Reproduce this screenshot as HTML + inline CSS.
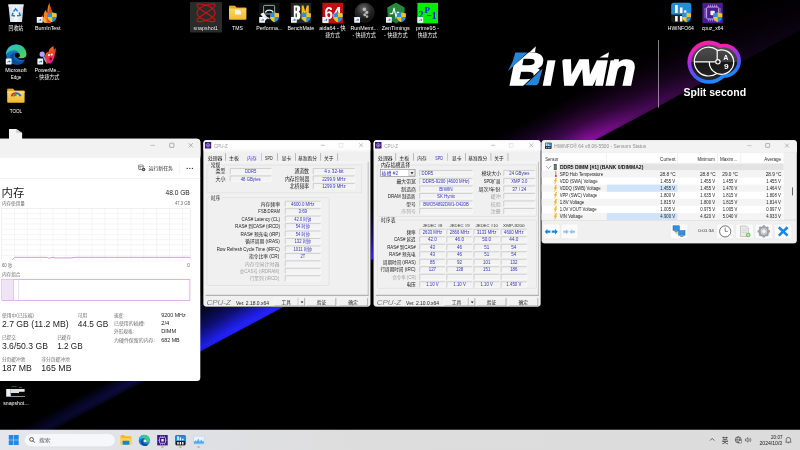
<!DOCTYPE html>
<html><head><meta charset="utf-8"><title>desktop</title><style>
html,body{margin:0;padding:0;background:#000;}
#r{position:relative;width:800px;height:450px;overflow:hidden;background:#000;font-family:'Liberation Sans','Noto Sans CJK SC',sans-serif;filter:blur(0.35px);}
#r div,#r span,#r>svg{position:absolute;white-space:nowrap;line-height:1;}
#r span{display:inline-block;}
#r>svg{left:0;top:0;}
.lb{text-shadow:0 0 1px #000,0.3px 0.4px 0.6px #000;}
</style></head><body><div id="r">
<svg width="800" height="450" viewBox="0 0 800 450"><svg x="0" y="0" width="800" height="450" viewBox="0 0 800 450">
<defs>
<linearGradient id="bc" x1="-240" y1="0" x2="700" y2="0" gradientUnits="userSpaceOnUse">
<stop offset="0" stop-color="#04041a"/><stop offset="0.191" stop-color="#0b0b3c"/><stop offset="0.25" stop-color="#1c1ce0"/><stop offset="0.30" stop-color="#2222ff"/><stop offset="0.415" stop-color="#2a20f0"/>
<stop offset="0.606" stop-color="#5a18c8"/><stop offset="0.723" stop-color="#8a10a0"/><stop offset="0.787" stop-color="#4c0a5c"/><stop offset="0.851" stop-color="#2a0836"/><stop offset="0.915" stop-color="#0f0416"/><stop offset="1" stop-color="#08020c"/>
</linearGradient>
<linearGradient id="bm" x1="0" y1="-50" x2="0" y2="0" gradientUnits="userSpaceOnUse">
<stop offset="0" stop-color="#fff" stop-opacity="0"/><stop offset="0.3" stop-color="#fff" stop-opacity="0.16"/><stop offset="0.6" stop-color="#fff" stop-opacity="0.44"/><stop offset="0.84" stop-color="#fff" stop-opacity="0.85"/><stop offset="0.93" stop-color="#fff" stop-opacity="1"/><stop offset="1" stop-color="#fff" stop-opacity="0.93"/>
</linearGradient>
<mask id="mk" maskUnits="userSpaceOnUse" x="-300" y="-60" width="1100" height="61"><rect x="-300" y="-60" width="1100" height="60" fill="url(#bm)"/></mask>
<linearGradient id="bc2" x1="-300" y1="0" x2="-40" y2="0" gradientUnits="userSpaceOnUse"><stop offset="0" stop-color="#020208"/><stop offset="0.35" stop-color="#060622"/><stop offset="0.75" stop-color="#0a0a3a"/><stop offset="1" stop-color="#0e0e48"/></linearGradient>
<linearGradient id="bm2" x1="0" y1="-18" x2="0" y2="0" gradientUnits="userSpaceOnUse"><stop offset="0" stop-color="#fff" stop-opacity="0"/><stop offset="0.45" stop-color="#fff" stop-opacity="0.7"/><stop offset="0.72" stop-color="#fff" stop-opacity="1"/><stop offset="1" stop-color="#fff" stop-opacity="0.35"/></linearGradient>
<mask id="mk2" maskUnits="userSpaceOnUse" x="-300" y="-18" width="262" height="18"><rect x="-300" y="-18" width="262" height="18" fill="url(#bm2)"/></mask>
</defs>
<g transform="translate(200.6 351.5) rotate(-28.15)">
<rect x="-40" y="-60" width="840" height="60" fill="url(#bc)" mask="url(#mk)"/>
<rect x="-300" y="-18" width="261" height="18" fill="url(#bc2)" mask="url(#mk2)"/>
</g>
</svg><defs><linearGradient id="tbg" x1="0" y1="0" x2="1" y2="0"><stop offset="0" stop-color="#e4e6eb"/><stop offset="0.22" stop-color="#e0e1e5"/><stop offset="0.45" stop-color="#dddddd"/><stop offset="1" stop-color="#dcdcdc"/></linearGradient></defs><rect x="0" y="429.75" width="800" height="20.5" fill="url(#tbg)"/><rect x="-8" y="138.85" width="208.3" height="242.1" rx="3.5" fill="#fff"/><rect x="-8" y="138.85" width="208.3" height="18.9" rx="3.5" fill="#f2f2f2"/><rect x="-8" y="145" width="208.3" height="12.75" fill="#f2f2f2"/><rect x="-8" y="178" width="208.3" height="0.5" fill="#e6e6e6"/><rect x="179.6" y="161.5" width="0.45" height="12.5" fill="#e6e6e6"/><svg x="143.3" y="139.6" width="60" height="12" viewBox="0 0 60 12">
<path d="M7.2 5.8h4.4" stroke="#8a8a8a" stroke-width="0.5" fill="none"/>
<rect x="26.4" y="3.6" width="4.2" height="4.2" rx="0.5" stroke="#777" stroke-width="0.55" fill="none"/>
<path d="M45.4 3.6l4.2 4.2M49.6 3.6l-4.2 4.2" stroke="#777" stroke-width="0.55" fill="none"/>
</svg><svg x="138" y="164.3" width="10" height="8" viewBox="0 0 10 8">
<rect x="0.6" y="0.6" width="4.6" height="4.6" rx="0.6" stroke="#333" stroke-width="0.55" fill="none"/>
<path d="M0.6 2.3h4.6M2.2 2.3v2.9" stroke="#333" stroke-width="0.45"/>
<circle cx="5.6" cy="5.2" r="1.7" fill="#333"/><path d="M5.6 4.3v1.8M4.7 5.2h1.8" stroke="#fff" stroke-width="0.45"/>
</svg></svg>
<span style="top:167px;font-size:4.9px;color:#222;left:148px;transform-origin:0 0;transform:translate(0.5px,0.3px) rotate(0.01deg) scaleX(1.001);">运行新任务</span>
<svg width="800" height="450" viewBox="0 0 800 450"><svg x="186" y="167" width="8" height="3" viewBox="0 0 8 3"><circle cx="1.2" cy="1.4" r="0.62" fill="#222"/><circle cx="3.8" cy="1.4" r="0.62" fill="#222"/><circle cx="6.4" cy="1.4" r="0.62" fill="#222"/></svg></svg>
<span style="top:187px;font-size:11.6px;color:#1b1b1b;left:1px;transform-origin:0 0;transform:translate(0.6px,0.3px) rotate(0.01deg) scaleX(0.983);">内存</span>
<span style="top:190px;font-size:6.7px;color:#1b1b1b;right:609px;transform-origin:100% 0;transform:translate(-0.8px,0.2px) rotate(0.01deg) scaleX(0.990);">48.0 GB</span>
<span style="top:202px;font-size:4.7px;color:#6b6b6b;left:1px;transform-origin:0 0;transform:translate(0.9px,0.1px) rotate(0.01deg) scaleX(0.981);">内存使用量</span>
<span style="top:202px;font-size:4.7px;color:#6b6b6b;right:609px;transform-origin:100% 0;transform:translate(-0.8px,0px) rotate(0.01deg) scaleX(0.901);">47.3 GB</span>
<svg width="800" height="450" viewBox="0 0 800 450"><svg x="0" y="200" width="200" height="60" viewBox="0 200 200 60"><rect x="1.7" y="208.4" width="188.70000000000002" height="52.099999999999994" fill="#fff" stroke="#e2dfe5" stroke-width="0.5"/><path d="M1.7 213.61H190.4 M1.7 218.82H190.4 M1.7 224.03H190.4 M1.7 229.24H190.4 M1.7 234.45H190.4 M1.7 239.66H190.4 M1.7 244.87H190.4 M1.7 250.08H190.4 M1.7 255.29H190.4 M14.43 208.4V260.5 M27.36 208.4V260.5 M40.29 208.4V260.5 M53.22 208.4V260.5 M66.15 208.4V260.5 M79.08 208.4V260.5 M92.01 208.4V260.5 M104.94 208.4V260.5 M117.87 208.4V260.5 M130.80 208.4V260.5 M143.73 208.4V260.5 M156.66 208.4V260.5 M169.59 208.4V260.5 M182.52 208.4V260.5" stroke="#eaeaea" stroke-width="0.5" fill="none"/><path d="M11.4 260.5 L14.6 257.3 H46 L49.5 258.2 L52.5 257.2 L55 257.9 H72 L75.5 257.3 H190.4" stroke="#c07ad2" stroke-width="0.75" fill="none"/></svg></svg>
<span style="top:263px;font-size:4.6px;color:#6b6b6b;left:1px;transform-origin:0 0;transform:translate(0.9px,0.9px) rotate(0.01deg) scaleX(0.938);">60 秒</span>
<span style="top:263px;font-size:4.6px;color:#6b6b6b;right:609px;transform-origin:100% 0;transform:translate(-0.8px,0.9px) rotate(0.01deg);">0</span>
<span style="top:273px;font-size:4.7px;color:#6b6b6b;left:1px;transform-origin:0 0;transform:translate(0.9px,0.2px) rotate(0.01deg) scaleX(0.986);">内存组合</span>
<svg width="800" height="450" viewBox="0 0 800 450"><rect x="1.9" y="279.3" width="188" height="21" fill="#fff" stroke="#c583d6" stroke-width="0.6"/><rect x="2.2" y="279.6" width="11.2" height="20.4" fill="#efe4f3"/><rect x="13.3" y="279.6" width="0.5" height="20.4" fill="#c9a0d8"/><rect x="18" y="279.6" width="0.5" height="20.4" fill="#dcc3e6"/></svg>
<span style="top:313px;font-size:4.7px;color:#6b6b6b;left:1px;transform-origin:0 0;transform:translate(0.9px,0.6px) rotate(0.01deg) scaleX(1.024);">使用中(已压缩)</span>
<span style="top:319px;font-size:8.5px;color:#1b1b1b;left:1px;transform-origin:0 0;transform:translate(0.9px,0.7px) rotate(0.01deg) scaleX(1.020);">2.7 GB (11.2 MB)</span>
<span style="top:313px;font-size:4.7px;color:#6b6b6b;left:77px;transform-origin:0 0;transform:translate(0.8px,0.6px) rotate(0.01deg) scaleX(0.990);">可用</span>
<span style="top:319px;font-size:8.5px;color:#1b1b1b;left:77px;transform-origin:0 0;transform:translate(0.8px,0.7px) rotate(0.01deg) scaleX(0.978);">44.5 GB</span>
<span style="top:335px;font-size:4.7px;color:#6b6b6b;left:1px;transform-origin:0 0;transform:translate(0.9px,0.6px) rotate(0.01deg) scaleX(0.994);">已提交</span>
<span style="top:341px;font-size:8.5px;color:#1b1b1b;left:1px;transform-origin:0 0;transform:translate(0.9px,0.7px) rotate(0.01deg) scaleX(1.014);">3.6/50.3 GB</span>
<span style="top:335px;font-size:4.7px;color:#6b6b6b;left:57px;transform-origin:0 0;transform:translate(0.2px,0.6px) rotate(0.01deg) scaleX(0.994);">已缓存</span>
<span style="top:341px;font-size:8.5px;color:#1b1b1b;left:57px;transform-origin:0 0;transform:translate(0.2px,0.7px) rotate(0.01deg) scaleX(0.963);">1.2 GB</span>
<span style="top:357px;font-size:4.7px;color:#6b6b6b;left:1px;transform-origin:0 0;transform:translate(0.9px,0.6px) rotate(0.01deg) scaleX(1.002);">分页缓冲池</span>
<span style="top:363px;font-size:8.5px;color:#1b1b1b;left:1px;transform-origin:0 0;transform:translate(0.9px,0.7px) rotate(0.01deg) scaleX(1.024);">187 MB</span>
<span style="top:357px;font-size:4.7px;color:#6b6b6b;left:41px;transform-origin:0 0;transform:translate(0.2px,0.6px) rotate(0.01deg) scaleX(1.013);">非分页缓冲池</span>
<span style="top:363px;font-size:8.5px;color:#1b1b1b;left:41px;transform-origin:0 0;transform:translate(0.2px,0.7px) rotate(0.01deg) scaleX(1.034);">165 MB</span>
<span style="top:313px;font-size:4.7px;color:#6b6b6b;left:114px;transform-origin:0 0;transform:translate(0px,0.7px) rotate(0.01deg) scaleX(0.982);">速度:</span>
<span style="top:312px;font-size:5.3px;color:#1b1b1b;left:161px;transform-origin:0 0;transform:translate(0.2px,0.7px) rotate(0.01deg) scaleX(1.014);">9200 MHz</span>
<span style="top:322px;font-size:4.7px;color:#6b6b6b;left:114px;transform-origin:0 0;transform:translate(0px,0.07px) rotate(0.01deg) scaleX(1.053);">已使用的插槽:</span>
<span style="top:321px;font-size:5.3px;color:#1b1b1b;left:161px;transform-origin:0 0;transform:translate(0.2px,0.07px) rotate(0.01deg) scaleX(1.085);">2/4</span>
<span style="top:330px;font-size:4.7px;color:#6b6b6b;left:114px;transform-origin:0 0;transform:translate(0px,0.44px) rotate(0.01deg) scaleX(0.997);">外形规格:</span>
<span style="top:329px;font-size:5.3px;color:#1b1b1b;left:161px;transform-origin:0 0;transform:translate(0.2px,0.44px) rotate(0.01deg) scaleX(1.062);">DIMM</span>
<span style="top:338px;font-size:4.7px;color:#6b6b6b;left:114px;transform-origin:0 0;transform:translate(0px,0.81px) rotate(0.01deg) scaleX(1.056);">为硬件保留的内存:</span>
<span style="top:337px;font-size:5.3px;color:#1b1b1b;left:161px;transform-origin:0 0;transform:translate(0.2px,0.81px) rotate(0.01deg) scaleX(1.013);">682 MB</span>
<svg width="800" height="450" viewBox="0 0 800 450"><rect x="203.1" y="139.9" width="167.6" height="167.1" rx="3.4" fill="#4a4a4a"/><rect x="203.5" y="140.3" width="166.8" height="166.3" rx="3" fill="#f0f0f0"/><defs><linearGradient id="ctg203" x1="0" y1="0" x2="0" y2="1"><stop offset="0" stop-color="#fdfdfd"/><stop offset="0.72" stop-color="#fdfdfd"/><stop offset="1" stop-color="#f0f0f0"/></linearGradient></defs><rect x="203.5" y="140.3" width="166.8" height="12" rx="3" fill="url(#ctg203)"/><svg x="204.7" y="141.9" width="7" height="7" viewBox="0 0 7 7"><rect width="6.6" height="6.6" rx="0.5" fill="#3d1783"/><circle cx="3.3" cy="3.3" r="1.7" fill="none" stroke="#b9a2ea" stroke-width="0.7"/><circle cx="3.3" cy="3.3" r="0.7" fill="#d9cbf6"/><path d="M3.3 0.6v1M3.3 5v1M0.6 3.3h1M5 3.3h1" stroke="#8e6fd0" stroke-width="0.5"/></svg></svg>
<span style="top:143px;font-size:5px;color:#9b9b9b;left:214px;transform-origin:0 0;transform:translate(0.1px,0.7px) rotate(0.01deg) scaleX(0.890);">CPU-Z</span>
<svg width="800" height="450" viewBox="0 0 800 450"><svg x="318.5" y="140.5" width="50" height="10" viewBox="0 0 50 10">
<path d="M2.4 4.8h4.2" stroke="#8a8a8a" stroke-width="0.5"/>
<rect x="20.6" y="2.9" width="3.8" height="3.8" stroke="#d6d6d6" stroke-width="0.5" fill="none"/>
<path d="M40.6 2.8l3.9 3.9M44.5 2.8l-3.9 3.9" stroke="#8a8a8a" stroke-width="0.5"/></svg></svg>
<span style="top:155px;font-size:5.1px;color:#1c1c1c;left:207px;transform-origin:0 0;transform:translate(0.9px,0.6px) rotate(0.01deg) scaleX(0.954);">处理器</span>
<span style="top:155px;font-size:5.1px;color:#1c1c1c;left:229px;transform-origin:0 0;transform:translate(0px,0.6px) rotate(0.01deg) scaleX(0.980);">主板</span>
<span style="top:155px;font-size:5.1px;color:#3434c4;left:247px;transform-origin:0 0;transform:translate(0.1px,0.6px) rotate(0.01deg) scaleX(0.941);">内存</span>
<span style="top:156px;font-size:4.5px;color:#1c1c1c;left:265px;transform-origin:0 0;transform:translate(0.1px,0.6px) rotate(0.01deg) scaleX(0.820);">SPD</span>
<span style="top:155px;font-size:5.1px;color:#1c1c1c;left:281px;transform-origin:0 0;transform:translate(0.7px,0.6px) rotate(0.01deg) scaleX(0.941);">显卡</span>
<span style="top:155px;font-size:5.1px;color:#1c1c1c;left:298px;transform-origin:0 0;transform:translate(0.1px,0.6px) rotate(0.01deg) scaleX(0.932);">基准跑分</span>
<span style="top:155px;font-size:5.1px;color:#1c1c1c;left:324px;transform-origin:0 0;transform:translate(0.1px,0.6px) rotate(0.01deg) scaleX(0.921);">关于</span>
<svg width="800" height="450" viewBox="0 0 800 450"><rect x="225.3" y="153.2" width="0.55" height="7.6" fill="#8c8c8c"/><rect x="261" y="153.2" width="0.55" height="7.6" fill="#a9a9a9"/><rect x="277.1" y="153.2" width="0.55" height="7.6" fill="#8c8c8c"/><rect x="295" y="153.2" width="0.55" height="7.6" fill="#8c8c8c"/><rect x="320.5" y="153.2" width="0.55" height="7.6" fill="#8c8c8c"/><rect x="337.5" y="153.2" width="0.55" height="7.6" fill="#8c8c8c"/><path d="M205.85 295.6V162.05H368.5" fill="none" stroke="#fcfcfc" stroke-width="0.5"/><path d="M368.2 161.8V295.3" fill="none" stroke="#9a9a9a" stroke-width="0.6"/><path d="M205.6 295.3H368.5" fill="none" stroke="#6e6e6e" stroke-width="0.6"/></svg>
<span style="top:298px;font-size:8px;color:#808080;font-style:italic;left:206px;transform-origin:0 0;transform:translate(0.5px,0.5px) rotate(0.01deg) scaleX(0.998);">CPU-Z</span>
<span style="top:301px;font-size:4.5px;color:#222;left:235px;transform-origin:0 0;transform:translate(0.9px,0.6px) rotate(0.01deg) scaleX(1.099);">Ver. 2.18.0.x64</span>
<svg width="800" height="450" viewBox="0 0 800 450"><rect x="273.9" y="298" width="24.6" height="8.2" fill="#f1f1f1"/><path d="M274.15 306.2V298.25H298.5" fill="none" stroke="#fff" stroke-width="0.5"/><path d="M273.9 305.9H298.2V298" fill="none" stroke="#868686" stroke-width="0.6"/></svg>
<div style="top:300px;font-size:5.1px;color:#1c1c1c;left:136px;width:300px;text-align:center;transform-origin:50% 0;transform:translate(0.2px,0px) rotate(0.01deg) scaleX(0.931);"><span style="position:static">工具</span></div>
<svg width="800" height="450" viewBox="0 0 800 450"><rect x="298.7" y="298" width="6.2" height="8.2" fill="#f1f1f1"/><path d="M298.95 306.2V298.25H304.9" fill="none" stroke="#fff" stroke-width="0.5"/><path d="M298.7 305.9H304.6V298" fill="none" stroke="#868686" stroke-width="0.6"/><svg x="300.3" y="301" width="4" height="3" viewBox="0 0 4 3"><path d="M0.3 0.4h2.8l-1.4 1.8z" fill="#111"/></svg><rect x="306.7" y="298" width="29.4" height="8.2" fill="#f1f1f1"/><path d="M306.95 306.2V298.25H336.1" fill="none" stroke="#fff" stroke-width="0.5"/><path d="M306.7 305.9H335.8V298" fill="none" stroke="#868686" stroke-width="0.6"/></svg>
<div style="top:300px;font-size:5.1px;color:#1c1c1c;left:171px;width:300px;text-align:center;transform-origin:50% 0;transform:translate(0.4px,0px) rotate(0.01deg) scaleX(0.931);"><span style="position:static">验证</span></div>
<svg width="800" height="450" viewBox="0 0 800 450"><rect x="338.3" y="298" width="29.6" height="8.2" fill="#f1f1f1"/><path d="M338.55 306.2V298.25H367.9" fill="none" stroke="#fff" stroke-width="0.5"/><path d="M338.3 305.9H367.6V298" fill="none" stroke="#868686" stroke-width="0.6"/></svg>
<div style="top:300px;font-size:5.1px;color:#1c1c1c;left:203px;width:300px;text-align:center;transform-origin:50% 0;transform:translate(0.1px,0px) rotate(0.01deg) scaleX(0.931);"><span style="position:static">确定</span></div>
<svg width="800" height="450" viewBox="0 0 800 450"><rect x="207.35" y="165.65" width="154.7" height="27.7" rx="0.8" fill="none" stroke="#fff" stroke-width="0.5"/><rect x="206.95" y="165.25" width="154.7" height="27.7" rx="0.8" fill="none" stroke="#d0d0d0" stroke-width="0.5"/><rect x="209.7" y="163" width="11.7" height="4" fill="#f0f0f0"/></svg>
<span style="top:163px;font-size:5.2px;color:#1c1c1c;left:210px;transform-origin:0 0;transform:translate(0.7px,0px) rotate(0.01deg) scaleX(0.914);">常规</span>
<span style="top:169px;font-size:5.2px;color:#1c1c1c;right:574px;transform-origin:100% 0;transform:translate(-0.8px,0.2px) rotate(0.01deg) scaleX(0.962);">类型</span>
<svg width="800" height="450" viewBox="0 0 800 450"><rect x="230" y="168.2" width="41.4" height="5.9" fill="#f3f3f3"/><path d="M230.25 174.1V168.45H271.4" fill="none" stroke="#adadad" stroke-width="0.5"/><path d="M230.5 173.85H271.15V168.7" fill="none" stroke="#fff" stroke-width="0.5"/></svg>
<div style="top:170px;font-size:4.5px;color:#3434c4;left:100px;width:300px;text-align:center;transform-origin:50% 0;transform:translate(0.7px,0.15px) rotate(0.01deg) scaleX(0.938);"><span style="position:static">DDR5</span></div>
<span style="top:176px;font-size:5.2px;color:#1c1c1c;right:574px;transform-origin:100% 0;transform:translate(-0.8px,0.7px) rotate(0.01deg) scaleX(0.962);">大小</span>
<svg width="800" height="450" viewBox="0 0 800 450"><rect x="230" y="175.7" width="41.4" height="5.9" fill="#f3f3f3"/><path d="M230.25 181.6V175.95H271.4" fill="none" stroke="#adadad" stroke-width="0.5"/><path d="M230.5 181.35H271.15V176.2" fill="none" stroke="#fff" stroke-width="0.5"/></svg>
<div style="top:177px;font-size:4.5px;color:#3434c4;left:100px;width:300px;text-align:center;transform-origin:50% 0;transform:translate(0.7px,0.65px) rotate(0.01deg) scaleX(0.952);"><span style="position:static">48 GBytes</span></div>
<span style="top:169px;font-size:5.2px;color:#1c1c1c;right:490px;transform-origin:100% 0;transform:translate(-0.6px,0.2px) rotate(0.01deg) scaleX(0.937);">通道数</span>
<svg width="800" height="450" viewBox="0 0 800 450"><rect x="313" y="168.2" width="41.8" height="5.9" fill="#f3f3f3"/><path d="M313.25 174.1V168.45H354.8" fill="none" stroke="#adadad" stroke-width="0.5"/><path d="M313.5 173.85H354.55V168.7" fill="none" stroke="#fff" stroke-width="0.5"/></svg>
<div style="top:170px;font-size:4.5px;color:#3434c4;left:183px;width:300px;text-align:center;transform-origin:50% 0;transform:translate(0.9px,0.15px) rotate(0.01deg) scaleX(1.053);"><span style="position:static">4 x 32-bit</span></div>
<span style="top:176px;font-size:5.2px;color:#1c1c1c;right:490px;transform-origin:100% 0;transform:translate(-0.6px,0.7px) rotate(0.01deg) scaleX(0.940);">内存控制器</span>
<svg width="800" height="450" viewBox="0 0 800 450"><rect x="313" y="175.7" width="41.8" height="5.9" fill="#f3f3f3"/><path d="M313.25 181.6V175.95H354.8" fill="none" stroke="#adadad" stroke-width="0.5"/><path d="M313.5 181.35H354.55V176.2" fill="none" stroke="#fff" stroke-width="0.5"/></svg>
<div style="top:177px;font-size:4.5px;color:#3434c4;left:183px;width:300px;text-align:center;transform-origin:50% 0;transform:translate(0.9px,0.65px) rotate(0.01deg) scaleX(0.968);"><span style="position:static">2299.9 MHz</span></div>
<span style="top:184px;font-size:5.2px;color:#1c1c1c;right:490px;transform-origin:100% 0;transform:translate(-0.6px,0.2px) rotate(0.01deg) scaleX(0.939);">北桥频率</span>
<svg width="800" height="450" viewBox="0 0 800 450"><rect x="313" y="183.2" width="41.8" height="5.9" fill="#f3f3f3"/><path d="M313.25 189.1V183.45H354.8" fill="none" stroke="#adadad" stroke-width="0.5"/><path d="M313.5 188.85H354.55V183.7" fill="none" stroke="#fff" stroke-width="0.5"/></svg>
<div style="top:185px;font-size:4.5px;color:#3434c4;left:183px;width:300px;text-align:center;transform-origin:50% 0;transform:translate(0.9px,0.15px) rotate(0.01deg) scaleX(0.968);"><span style="position:static">1299.9 MHz</span></div>
<svg width="800" height="450" viewBox="0 0 800 450"><rect x="207.35" y="198.25" width="122.3" height="87.7" rx="0.8" fill="none" stroke="#fff" stroke-width="0.5"/><rect x="206.95" y="197.85" width="122.3" height="87.7" rx="0.8" fill="none" stroke="#d0d0d0" stroke-width="0.5"/><rect x="209.7" y="195.6" width="11.7" height="4" fill="#f0f0f0"/></svg>
<span style="top:195px;font-size:5.2px;color:#1c1c1c;left:210px;transform-origin:0 0;transform:translate(0.7px,0.6px) rotate(0.01deg) scaleX(0.914);">时序</span>
<span style="top:202px;font-size:5.1px;color:#1c1c1c;right:520px;transform-origin:100% 0;transform:translate(-0.3px,0px) rotate(0.01deg) scaleX(0.966);">内存频率</span>
<svg width="800" height="450" viewBox="0 0 800 450"><rect x="285" y="201" width="35.6" height="5.9" fill="#f3f3f3"/><path d="M285.25 206.9V201.25H320.6" fill="none" stroke="#adadad" stroke-width="0.5"/><path d="M285.5 206.65H320.35V201.5" fill="none" stroke="#fff" stroke-width="0.5"/></svg>
<div style="top:203px;font-size:4.5px;color:#3434c4;left:152px;width:300px;text-align:center;transform-origin:50% 0;transform:translate(0.8px,0px) rotate(0.01deg) scaleX(0.968);"><span style="position:static">4600.0 MHz</span></div>
<span style="top:210px;font-size:4.7px;color:#1c1c1c;right:520px;transform-origin:100% 0;transform:translate(-0.3px,0.45px) rotate(0.01deg) scaleX(0.891);">FSB:DRAM</span>
<svg width="800" height="450" viewBox="0 0 800 450"><rect x="285" y="208.45" width="35.6" height="5.9" fill="#f3f3f3"/><path d="M285.25 214.35V208.7H320.6" fill="none" stroke="#adadad" stroke-width="0.5"/><path d="M285.5 214.1H320.35V208.95" fill="none" stroke="#fff" stroke-width="0.5"/></svg>
<div style="top:210px;font-size:4.5px;color:#3434c4;left:152px;width:300px;text-align:center;transform-origin:50% 0;transform:translate(0.8px,0.45px) rotate(0.01deg) scaleX(0.970);"><span style="position:static">3:69</span></div>
<span style="top:217px;font-size:4.7px;color:#1c1c1c;right:520px;transform-origin:100% 0;transform:translate(-0.3px,0.9px) rotate(0.01deg) scaleX(0.956);">CAS# Latency (CL)</span>
<svg width="800" height="450" viewBox="0 0 800 450"><rect x="285" y="215.9" width="35.6" height="5.9" fill="#f3f3f3"/><path d="M285.25 221.8V216.15H320.6" fill="none" stroke="#adadad" stroke-width="0.5"/><path d="M285.5 221.55H320.35V216.4" fill="none" stroke="#fff" stroke-width="0.5"/></svg>
<div style="top:217px;font-size:4.5px;color:#3434c4;left:152px;width:300px;text-align:center;transform-origin:50% 0;transform:translate(0.8px,0.9px) rotate(0.01deg) scaleX(0.894);"><span style="position:static">42.0 时钟</span></div>
<span style="top:224px;font-size:5.1px;color:#1c1c1c;right:520px;transform-origin:100% 0;transform:translate(-0.3px,0.35px) rotate(0.01deg) scaleX(0.893);">RAS# 到CAS# (tRCD)</span>
<svg width="800" height="450" viewBox="0 0 800 450"><rect x="285" y="223.35" width="35.6" height="5.9" fill="#f3f3f3"/><path d="M285.25 229.25V223.6H320.6" fill="none" stroke="#adadad" stroke-width="0.5"/><path d="M285.5 229H320.35V223.85" fill="none" stroke="#fff" stroke-width="0.5"/></svg>
<div style="top:225px;font-size:4.5px;color:#3434c4;left:152px;width:300px;text-align:center;transform-origin:50% 0;transform:translate(0.8px,0.35px) rotate(0.01deg) scaleX(0.917);"><span style="position:static">54 时钟</span></div>
<span style="top:231px;font-size:5.1px;color:#1c1c1c;right:520px;transform-origin:100% 0;transform:translate(-0.3px,0.8px) rotate(0.01deg) scaleX(0.914);">RAS# 预充电 (tRP)</span>
<svg width="800" height="450" viewBox="0 0 800 450"><rect x="285" y="230.8" width="35.6" height="5.9" fill="#f3f3f3"/><path d="M285.25 236.7V231.05H320.6" fill="none" stroke="#adadad" stroke-width="0.5"/><path d="M285.5 236.45H320.35V231.3" fill="none" stroke="#fff" stroke-width="0.5"/></svg>
<div style="top:232px;font-size:4.5px;color:#3434c4;left:152px;width:300px;text-align:center;transform-origin:50% 0;transform:translate(0.8px,0.8px) rotate(0.01deg) scaleX(0.917);"><span style="position:static">54 时钟</span></div>
<span style="top:239px;font-size:5.1px;color:#1c1c1c;right:520px;transform-origin:100% 0;transform:translate(-0.3px,0.25px) rotate(0.01deg) scaleX(0.928);">循环周期 (tRAS)</span>
<svg width="800" height="450" viewBox="0 0 800 450"><rect x="285" y="238.25" width="35.6" height="5.9" fill="#f3f3f3"/><path d="M285.25 244.15V238.5H320.6" fill="none" stroke="#adadad" stroke-width="0.5"/><path d="M285.5 243.9H320.35V238.75" fill="none" stroke="#fff" stroke-width="0.5"/></svg>
<div style="top:240px;font-size:4.5px;color:#3434c4;left:152px;width:300px;text-align:center;transform-origin:50% 0;transform:translate(0.8px,0.25px) rotate(0.01deg) scaleX(0.929);"><span style="position:static">132 时钟</span></div>
<span style="top:247px;font-size:4.7px;color:#1c1c1c;right:520px;transform-origin:100% 0;transform:translate(-0.3px,0.7px) rotate(0.01deg) scaleX(0.941);">Row Refresh Cycle Time (tRFC)</span>
<svg width="800" height="450" viewBox="0 0 800 450"><rect x="285" y="245.7" width="35.6" height="5.9" fill="#f3f3f3"/><path d="M285.25 251.6V245.95H320.6" fill="none" stroke="#adadad" stroke-width="0.5"/><path d="M285.5 251.35H320.35V246.2" fill="none" stroke="#fff" stroke-width="0.5"/></svg>
<div style="top:247px;font-size:4.5px;color:#3434c4;left:152px;width:300px;text-align:center;transform-origin:50% 0;transform:translate(0.8px,0.7px) rotate(0.01deg) scaleX(0.928);"><span style="position:static">1011 时钟</span></div>
<span style="top:254px;font-size:5.1px;color:#1c1c1c;right:520px;transform-origin:100% 0;transform:translate(-0.3px,0.15px) rotate(0.01deg) scaleX(0.928);">指令比率 (CR)</span>
<svg width="800" height="450" viewBox="0 0 800 450"><rect x="285" y="253.15" width="35.6" height="5.9" fill="#f3f3f3"/><path d="M285.25 259.05V253.4H320.6" fill="none" stroke="#adadad" stroke-width="0.5"/><path d="M285.5 258.8H320.35V253.65" fill="none" stroke="#fff" stroke-width="0.5"/></svg>
<div style="top:255px;font-size:4.5px;color:#3434c4;left:152px;width:300px;text-align:center;transform-origin:50% 0;transform:translate(0.8px,0.15px) rotate(0.01deg) scaleX(0.873);"><span style="position:static">2T</span></div>
<span style="top:261px;font-size:5.1px;color:#a3a3a3;right:520px;transform-origin:100% 0;transform:translate(-0.3px,0.6px) rotate(0.01deg) scaleX(0.970);">内存空闲计时器</span>
<svg width="800" height="450" viewBox="0 0 800 450"><rect x="285" y="260.6" width="35.6" height="5.9" fill="#f3f3f3"/><path d="M285.25 266.5V260.85H320.6" fill="none" stroke="#adadad" stroke-width="0.5"/><path d="M285.5 266.25H320.35V261.1" fill="none" stroke="#fff" stroke-width="0.5"/></svg>
<span style="top:269px;font-size:5.1px;color:#a3a3a3;right:520px;transform-origin:100% 0;transform:translate(-0.3px,0.05px) rotate(0.01deg) scaleX(0.865);">总CAS号 (tRDRAM)</span>
<svg width="800" height="450" viewBox="0 0 800 450"><rect x="285" y="268.05" width="35.6" height="5.9" fill="#f3f3f3"/><path d="M285.25 273.95V268.3H320.6" fill="none" stroke="#adadad" stroke-width="0.5"/><path d="M285.5 273.7H320.35V268.55" fill="none" stroke="#fff" stroke-width="0.5"/></svg>
<span style="top:276px;font-size:5.1px;color:#a3a3a3;right:520px;transform-origin:100% 0;transform:translate(-0.3px,0.5px) rotate(0.01deg) scaleX(0.909);">行至列 (tRCD)</span>
<svg width="800" height="450" viewBox="0 0 800 450"><rect x="285" y="275.5" width="35.6" height="5.9" fill="#f3f3f3"/><path d="M285.25 281.4V275.75H320.6" fill="none" stroke="#adadad" stroke-width="0.5"/><path d="M285.5 281.15H320.35V276" fill="none" stroke="#fff" stroke-width="0.5"/><rect x="373.3" y="139.9" width="167.6" height="167.1" rx="3.4" fill="#4a4a4a"/><rect x="373.7" y="140.3" width="166.8" height="166.3" rx="3" fill="#f0f0f0"/><defs><linearGradient id="ctg373" x1="0" y1="0" x2="0" y2="1"><stop offset="0" stop-color="#fdfdfd"/><stop offset="0.72" stop-color="#fdfdfd"/><stop offset="1" stop-color="#f0f0f0"/></linearGradient></defs><rect x="373.7" y="140.3" width="166.8" height="12" rx="3" fill="url(#ctg373)"/><svg x="374.9" y="141.9" width="7" height="7" viewBox="0 0 7 7"><rect width="6.6" height="6.6" rx="0.5" fill="#3d1783"/><circle cx="3.3" cy="3.3" r="1.7" fill="none" stroke="#b9a2ea" stroke-width="0.7"/><circle cx="3.3" cy="3.3" r="0.7" fill="#d9cbf6"/><path d="M3.3 0.6v1M3.3 5v1M0.6 3.3h1M5 3.3h1" stroke="#8e6fd0" stroke-width="0.5"/></svg></svg>
<span style="top:143px;font-size:5px;color:#9b9b9b;left:384px;transform-origin:0 0;transform:translate(0.3px,0.7px) rotate(0.01deg) scaleX(0.890);">CPU-Z</span>
<svg width="800" height="450" viewBox="0 0 800 450"><svg x="488.7" y="140.5" width="50" height="10" viewBox="0 0 50 10">
<path d="M2.4 4.8h4.2" stroke="#8a8a8a" stroke-width="0.5"/>
<rect x="20.6" y="2.9" width="3.8" height="3.8" stroke="#d6d6d6" stroke-width="0.5" fill="none"/>
<path d="M40.6 2.8l3.9 3.9M44.5 2.8l-3.9 3.9" stroke="#8a8a8a" stroke-width="0.5"/></svg></svg>
<span style="top:155px;font-size:5.1px;color:#1c1c1c;left:378px;transform-origin:0 0;transform:translate(0.1px,0.6px) rotate(0.01deg) scaleX(0.954);">处理器</span>
<span style="top:155px;font-size:5.1px;color:#1c1c1c;left:399px;transform-origin:0 0;transform:translate(0.2px,0.6px) rotate(0.01deg) scaleX(0.980);">主板</span>
<span style="top:155px;font-size:5.1px;color:#1c1c1c;left:417px;transform-origin:0 0;transform:translate(0.3px,0.6px) rotate(0.01deg) scaleX(0.941);">内存</span>
<span style="top:156px;font-size:4.5px;color:#3434c4;left:435px;transform-origin:0 0;transform:translate(0.3px,0.6px) rotate(0.01deg) scaleX(0.820);">SPD</span>
<span style="top:155px;font-size:5.1px;color:#1c1c1c;left:451px;transform-origin:0 0;transform:translate(0.9px,0.6px) rotate(0.01deg) scaleX(0.941);">显卡</span>
<span style="top:155px;font-size:5.1px;color:#1c1c1c;left:468px;transform-origin:0 0;transform:translate(0.3px,0.6px) rotate(0.01deg) scaleX(0.932);">基准跑分</span>
<span style="top:155px;font-size:5.1px;color:#1c1c1c;left:494px;transform-origin:0 0;transform:translate(0.3px,0.6px) rotate(0.01deg) scaleX(0.921);">关于</span>
<svg width="800" height="450" viewBox="0 0 800 450"><rect x="395.5" y="153.2" width="0.55" height="7.6" fill="#8c8c8c"/><rect x="413.3" y="153.2" width="0.55" height="7.6" fill="#8c8c8c"/><rect x="447.3" y="153.2" width="0.55" height="7.6" fill="#a9a9a9"/><rect x="465.2" y="153.2" width="0.55" height="7.6" fill="#8c8c8c"/><rect x="490.7" y="153.2" width="0.55" height="7.6" fill="#8c8c8c"/><rect x="507.7" y="153.2" width="0.55" height="7.6" fill="#8c8c8c"/><path d="M376.05 295.6V162.05H538.7" fill="none" stroke="#fcfcfc" stroke-width="0.5"/><path d="M538.4 161.8V295.3" fill="none" stroke="#9a9a9a" stroke-width="0.6"/><path d="M375.8 295.3H538.7" fill="none" stroke="#6e6e6e" stroke-width="0.6"/></svg>
<span style="top:298px;font-size:8px;color:#808080;font-style:italic;left:376px;transform-origin:0 0;transform:translate(0.7px,0.5px) rotate(0.01deg) scaleX(0.998);">CPU-Z</span>
<span style="top:301px;font-size:4.5px;color:#222;left:406px;transform-origin:0 0;transform:translate(0.1px,0.6px) rotate(0.01deg) scaleX(1.099);">Ver. 2.10.0.x64</span>
<svg width="800" height="450" viewBox="0 0 800 450"><rect x="444.1" y="298" width="24.6" height="8.2" fill="#f1f1f1"/><path d="M444.35 306.2V298.25H468.7" fill="none" stroke="#fff" stroke-width="0.5"/><path d="M444.1 305.9H468.4V298" fill="none" stroke="#868686" stroke-width="0.6"/></svg>
<div style="top:300px;font-size:5.1px;color:#1c1c1c;left:306px;width:300px;text-align:center;transform-origin:50% 0;transform:translate(0.4px,0px) rotate(0.01deg) scaleX(0.931);"><span style="position:static">工具</span></div>
<svg width="800" height="450" viewBox="0 0 800 450"><rect x="468.9" y="298" width="6.2" height="8.2" fill="#f1f1f1"/><path d="M469.15 306.2V298.25H475.1" fill="none" stroke="#fff" stroke-width="0.5"/><path d="M468.9 305.9H474.8V298" fill="none" stroke="#868686" stroke-width="0.6"/><svg x="470.5" y="301" width="4" height="3" viewBox="0 0 4 3"><path d="M0.3 0.4h2.8l-1.4 1.8z" fill="#111"/></svg><rect x="476.9" y="298" width="29.4" height="8.2" fill="#f1f1f1"/><path d="M477.15 306.2V298.25H506.3" fill="none" stroke="#fff" stroke-width="0.5"/><path d="M476.9 305.9H506V298" fill="none" stroke="#868686" stroke-width="0.6"/></svg>
<div style="top:300px;font-size:5.1px;color:#1c1c1c;left:341px;width:300px;text-align:center;transform-origin:50% 0;transform:translate(0.6px,0px) rotate(0.01deg) scaleX(0.931);"><span style="position:static">验证</span></div>
<svg width="800" height="450" viewBox="0 0 800 450"><rect x="508.5" y="298" width="29.6" height="8.2" fill="#f1f1f1"/><path d="M508.75 306.2V298.25H538.1" fill="none" stroke="#fff" stroke-width="0.5"/><path d="M508.5 305.9H537.8V298" fill="none" stroke="#868686" stroke-width="0.6"/></svg>
<div style="top:300px;font-size:5.1px;color:#1c1c1c;left:373px;width:300px;text-align:center;transform-origin:50% 0;transform:translate(0.3px,0px) rotate(0.01deg) scaleX(0.931);"><span style="position:static">确定</span></div>
<svg width="800" height="450" viewBox="0 0 800 450"><rect x="377.65" y="165.65" width="159.3" height="51.2" rx="0.8" fill="none" stroke="#fff" stroke-width="0.5"/><rect x="377.25" y="165.25" width="159.3" height="51.2" rx="0.8" fill="none" stroke="#d0d0d0" stroke-width="0.5"/><rect x="380" y="163" width="31.2" height="4" fill="#f0f0f0"/></svg>
<span style="top:163px;font-size:5.2px;color:#1c1c1c;left:381px;transform-origin:0 0;transform:translate(0px,0px) rotate(0.01deg) scaleX(0.931);">内存插槽选择</span>
<svg width="800" height="450" viewBox="0 0 800 450"><rect x="380.65" y="169.25" width="34.4" height="7.2" fill="#fff" stroke="#6f6f6f" stroke-width="0.5"/></svg>
<span style="top:171px;font-size:5px;color:#3434c4;left:381px;transform-origin:0 0;transform:translate(0.6px,0px) rotate(0.01deg) scaleX(0.973);">插槽 #2</span>
<svg width="800" height="450" viewBox="0 0 800 450"><rect x="408.9" y="169.8" width="5.6" height="6.1" fill="#ececec" stroke="#9a9a9a" stroke-width="0.4"/><svg x="410.3" y="172" width="4" height="3" viewBox="0 0 4 3"><path d="M0.2 0.3h2.9l-1.45 1.9z" fill="#111"/></svg><rect x="419.4" y="170.2" width="53.2" height="5.9" fill="#f3f3f3"/><path d="M419.65 176.1V170.45H472.6" fill="none" stroke="#adadad" stroke-width="0.5"/><path d="M419.9 175.85H472.35V170.7" fill="none" stroke="#fff" stroke-width="0.5"/></svg>
<span style="top:172px;font-size:4.5px;color:#3434c4;left:421px;transform-origin:0 0;transform:translate(0.6px,0.2px) rotate(0.01deg) scaleX(0.938);">DDR5</span>
<span style="top:179px;font-size:5.1px;color:#1c1c1c;right:384px;transform-origin:100% 0;transform:translate(-0.4px,0.2px) rotate(0.01deg) scaleX(0.961);">最大带宽</span>
<svg width="800" height="450" viewBox="0 0 800 450"><rect x="419.4" y="178.2" width="53.2" height="5.9" fill="#f3f3f3"/><path d="M419.65 184.1V178.45H472.6" fill="none" stroke="#adadad" stroke-width="0.5"/><path d="M419.9 183.85H472.35V178.7" fill="none" stroke="#fff" stroke-width="0.5"/></svg>
<div style="top:180px;font-size:4.5px;color:#3434c4;left:296px;width:300px;text-align:center;transform-origin:50% 0;transform:translate(0px,0.15px) rotate(0.01deg) scaleX(0.968);"><span style="position:static">DDR5-9200 (4600 MHz)</span></div>
<span style="top:186px;font-size:5.1px;color:#1c1c1c;right:384px;transform-origin:100% 0;transform:translate(-0.4px,0.7px) rotate(0.01deg) scaleX(0.954);">制造商</span>
<svg width="800" height="450" viewBox="0 0 800 450"><rect x="419.4" y="185.7" width="53.2" height="5.9" fill="#f3f3f3"/><path d="M419.65 191.6V185.95H472.6" fill="none" stroke="#adadad" stroke-width="0.5"/><path d="M419.9 191.35H472.35V186.2" fill="none" stroke="#fff" stroke-width="0.5"/></svg>
<div style="top:187px;font-size:4.5px;color:#3434c4;left:296px;width:300px;text-align:center;transform-origin:50% 0;transform:translate(0px,0.65px) rotate(0.01deg) scaleX(1.038);"><span style="position:static">BIWIN</span></div>
<span style="top:194px;font-size:5.1px;color:#1c1c1c;right:384px;transform-origin:100% 0;transform:translate(-0.4px,0.2px) rotate(0.01deg) scaleX(0.871);">DRAM 制造商</span>
<svg width="800" height="450" viewBox="0 0 800 450"><rect x="419.4" y="193.2" width="53.2" height="5.9" fill="#f3f3f3"/><path d="M419.65 199.1V193.45H472.6" fill="none" stroke="#adadad" stroke-width="0.5"/><path d="M419.9 198.85H472.35V193.7" fill="none" stroke="#fff" stroke-width="0.5"/></svg>
<div style="top:195px;font-size:4.5px;color:#3434c4;left:296px;width:300px;text-align:center;transform-origin:50% 0;transform:translate(0px,0.15px) rotate(0.01deg) scaleX(0.972);"><span style="position:static">SK Hynix</span></div>
<span style="top:201px;font-size:5.1px;color:#1c1c1c;right:384px;transform-origin:100% 0;transform:translate(-0.4px,0.7px) rotate(0.01deg) scaleX(0.941);">型号</span>
<svg width="800" height="450" viewBox="0 0 800 450"><rect x="419.4" y="200.7" width="53.2" height="5.9" fill="#f3f3f3"/><path d="M419.65 206.6V200.95H472.6" fill="none" stroke="#adadad" stroke-width="0.5"/><path d="M419.9 206.35H472.35V201.2" fill="none" stroke="#fff" stroke-width="0.5"/></svg>
<div style="top:202px;font-size:4.5px;color:#3434c4;left:296px;width:300px;text-align:center;transform-origin:50% 0;transform:translate(0px,0.65px) rotate(0.01deg) scaleX(0.933);"><span style="position:static">BWO54892DW1-O420B</span></div>
<span style="top:209px;font-size:5.1px;color:#a3a3a3;right:384px;transform-origin:100% 0;transform:translate(-0.4px,0.2px) rotate(0.01deg) scaleX(0.954);">序列号</span>
<svg width="800" height="450" viewBox="0 0 800 450"><rect x="419.4" y="208.2" width="53.2" height="5.9" fill="#f3f3f3"/><path d="M419.65 214.1V208.45H472.6" fill="none" stroke="#adadad" stroke-width="0.5"/><path d="M419.9 213.85H472.35V208.7" fill="none" stroke="#fff" stroke-width="0.5"/></svg>
<span style="top:171px;font-size:5.1px;color:#1c1c1c;right:299px;transform-origin:100% 0;transform:translate(-0.4px,0.2px) rotate(0.01deg) scaleX(0.961);">模块大小</span>
<svg width="800" height="450" viewBox="0 0 800 450"><rect x="503.5" y="170.2" width="31.6" height="5.9" fill="#f3f3f3"/><path d="M503.75 176.1V170.45H535.1" fill="none" stroke="#adadad" stroke-width="0.5"/><path d="M504 175.85H534.85V170.7" fill="none" stroke="#fff" stroke-width="0.5"/></svg>
<div style="top:172px;font-size:4.5px;color:#3434c4;left:369px;width:300px;text-align:center;transform-origin:50% 0;transform:translate(0.3px,0.15px) rotate(0.01deg) scaleX(0.952);"><span style="position:static">24 GBytes</span></div>
<span style="top:179px;font-size:5.1px;color:#1c1c1c;right:299px;transform-origin:100% 0;transform:translate(-0.4px,0.2px) rotate(0.01deg) scaleX(0.803);">SPD扩展</span>
<svg width="800" height="450" viewBox="0 0 800 450"><rect x="503.5" y="178.2" width="31.6" height="5.9" fill="#f3f3f3"/><path d="M503.75 184.1V178.45H535.1" fill="none" stroke="#adadad" stroke-width="0.5"/><path d="M504 183.85H534.85V178.7" fill="none" stroke="#fff" stroke-width="0.5"/></svg>
<div style="top:180px;font-size:4.5px;color:#3434c4;left:369px;width:300px;text-align:center;transform-origin:50% 0;transform:translate(0.3px,0.15px) rotate(0.01deg) scaleX(0.931);"><span style="position:static">XMP 3.0</span></div>
<span style="top:186px;font-size:5.1px;color:#1c1c1c;right:299px;transform-origin:100% 0;transform:translate(-0.4px,0.7px) rotate(0.01deg) scaleX(1.009);">周次/年份</span>
<svg width="800" height="450" viewBox="0 0 800 450"><rect x="503.5" y="185.7" width="31.6" height="5.9" fill="#f3f3f3"/><path d="M503.75 191.6V185.95H535.1" fill="none" stroke="#adadad" stroke-width="0.5"/><path d="M504 191.35H534.85V186.2" fill="none" stroke="#fff" stroke-width="0.5"/></svg>
<div style="top:187px;font-size:4.5px;color:#3434c4;left:369px;width:300px;text-align:center;transform-origin:50% 0;transform:translate(0.3px,0.65px) rotate(0.01deg) scaleX(1.017);"><span style="position:static">37 / 24</span></div>
<span style="top:194px;font-size:5.1px;color:#a3a3a3;right:299px;transform-origin:100% 0;transform:translate(-0.4px,0.2px) rotate(0.01deg) scaleX(0.980);">缓冲</span>
<svg width="800" height="450" viewBox="0 0 800 450"><rect x="503.5" y="193.2" width="31.6" height="5.9" fill="#f3f3f3"/><path d="M503.75 199.1V193.45H535.1" fill="none" stroke="#adadad" stroke-width="0.5"/><path d="M504 198.85H534.85V193.7" fill="none" stroke="#fff" stroke-width="0.5"/></svg>
<span style="top:201px;font-size:5.1px;color:#a3a3a3;right:299px;transform-origin:100% 0;transform:translate(-0.4px,0.7px) rotate(0.01deg) scaleX(0.980);">校验</span>
<svg width="800" height="450" viewBox="0 0 800 450"><rect x="503.5" y="200.7" width="31.6" height="5.9" fill="#f3f3f3"/><path d="M503.75 206.6V200.95H535.1" fill="none" stroke="#adadad" stroke-width="0.5"/><path d="M504 206.35H534.85V201.2" fill="none" stroke="#fff" stroke-width="0.5"/></svg>
<span style="top:209px;font-size:5.1px;color:#a3a3a3;right:299px;transform-origin:100% 0;transform:translate(-0.4px,0.2px) rotate(0.01deg) scaleX(0.980);">注册</span>
<svg width="800" height="450" viewBox="0 0 800 450"><rect x="503.5" y="208.2" width="31.6" height="5.9" fill="#f3f3f3"/><path d="M503.75 214.1V208.45H535.1" fill="none" stroke="#adadad" stroke-width="0.5"/><path d="M504 213.85H534.85V208.7" fill="none" stroke="#fff" stroke-width="0.5"/><rect x="377.65" y="220.65" width="159.3" height="68.1" rx="0.8" fill="none" stroke="#fff" stroke-width="0.5"/><rect x="377.25" y="220.25" width="159.3" height="68.1" rx="0.8" fill="none" stroke="#d0d0d0" stroke-width="0.5"/><rect x="380" y="218" width="16.7" height="4" fill="#f0f0f0"/></svg>
<span style="top:218px;font-size:5.2px;color:#1c1c1c;left:381px;transform-origin:0 0;transform:translate(0px,0px) rotate(0.01deg) scaleX(0.931);">时序表</span>
<div style="top:223px;font-size:4.4px;color:#333;left:282px;width:300px;text-align:center;transform-origin:50% 0;transform:translate(0.4px,0.7px) rotate(0.01deg) scaleX(0.976);"><span style="position:static">JEDEC #8</span></div>
<div style="top:223px;font-size:4.4px;color:#333;left:309px;width:300px;text-align:center;transform-origin:50% 0;transform:translate(0.55px,0.7px) rotate(0.01deg) scaleX(0.976);"><span style="position:static">JEDEC #9</span></div>
<div style="top:223px;font-size:4.4px;color:#333;left:336px;width:300px;text-align:center;transform-origin:50% 0;transform:translate(0.7px,0.7px) rotate(0.01deg) scaleX(0.980);"><span style="position:static">JEDEC #10</span></div>
<div style="top:223px;font-size:4.4px;color:#333;left:363px;width:300px;text-align:center;transform-origin:50% 0;transform:translate(0.85px,0.7px) rotate(0.01deg) scaleX(1.036);"><span style="position:static">XMP-9200</span></div>
<span style="top:230px;font-size:5.1px;color:#1c1c1c;right:384px;transform-origin:100% 0;transform:translate(-0.4px,0px) rotate(0.01deg) scaleX(0.921);">频率</span>
<svg width="800" height="450" viewBox="0 0 800 450"><rect x="419.4" y="229" width="25.9" height="5.9" fill="#f3f3f3"/><path d="M419.65 234.9V229.25H445.3" fill="none" stroke="#adadad" stroke-width="0.5"/><path d="M419.9 234.65H445.05V229.5" fill="none" stroke="#fff" stroke-width="0.5"/></svg>
<div style="top:230px;font-size:4.5px;color:#3434c4;left:282px;width:300px;text-align:center;transform-origin:50% 0;transform:translate(0.4px,0.95px) rotate(0.01deg) scaleX(0.950);"><span style="position:static">2633 MHz</span></div>
<svg width="800" height="450" viewBox="0 0 800 450"><rect x="446.55" y="229" width="25.9" height="5.9" fill="#f3f3f3"/><path d="M446.8 234.9V229.25H472.45" fill="none" stroke="#adadad" stroke-width="0.5"/><path d="M447.05 234.65H472.2V229.5" fill="none" stroke="#fff" stroke-width="0.5"/></svg>
<div style="top:230px;font-size:4.5px;color:#3434c4;left:309px;width:300px;text-align:center;transform-origin:50% 0;transform:translate(0.55px,0.95px) rotate(0.01deg) scaleX(0.950);"><span style="position:static">2866 MHz</span></div>
<svg width="800" height="450" viewBox="0 0 800 450"><rect x="473.7" y="229" width="25.9" height="5.9" fill="#f3f3f3"/><path d="M473.95 234.9V229.25H499.6" fill="none" stroke="#adadad" stroke-width="0.5"/><path d="M474.2 234.65H499.35V229.5" fill="none" stroke="#fff" stroke-width="0.5"/></svg>
<div style="top:230px;font-size:4.5px;color:#3434c4;left:336px;width:300px;text-align:center;transform-origin:50% 0;transform:translate(0.7px,0.95px) rotate(0.01deg) scaleX(0.950);"><span style="position:static">3133 MHz</span></div>
<svg width="800" height="450" viewBox="0 0 800 450"><rect x="500.85" y="229" width="25.9" height="5.9" fill="#f3f3f3"/><path d="M501.1 234.9V229.25H526.75" fill="none" stroke="#adadad" stroke-width="0.5"/><path d="M501.35 234.65H526.5V229.5" fill="none" stroke="#fff" stroke-width="0.5"/></svg>
<div style="top:230px;font-size:4.5px;color:#3434c4;left:363px;width:300px;text-align:center;transform-origin:50% 0;transform:translate(0.85px,0.95px) rotate(0.01deg) scaleX(0.950);"><span style="position:static">4600 MHz</span></div>
<span style="top:237px;font-size:5.1px;color:#1c1c1c;right:384px;transform-origin:100% 0;transform:translate(-0.4px,0.5px) rotate(0.01deg) scaleX(0.867);">CAS# 延迟</span>
<svg width="800" height="450" viewBox="0 0 800 450"><rect x="419.4" y="236.5" width="25.9" height="5.9" fill="#f3f3f3"/><path d="M419.65 242.4V236.75H445.3" fill="none" stroke="#adadad" stroke-width="0.5"/><path d="M419.9 242.15H445.05V237" fill="none" stroke="#fff" stroke-width="0.5"/></svg>
<div style="top:238px;font-size:4.5px;color:#3434c4;left:282px;width:300px;text-align:center;transform-origin:50% 0;transform:translate(0.4px,0.45px) rotate(0.01deg) scaleX(1.027);"><span style="position:static">42.0</span></div>
<svg width="800" height="450" viewBox="0 0 800 450"><rect x="446.55" y="236.5" width="25.9" height="5.9" fill="#f3f3f3"/><path d="M446.8 242.4V236.75H472.45" fill="none" stroke="#adadad" stroke-width="0.5"/><path d="M447.05 242.15H472.2V237" fill="none" stroke="#fff" stroke-width="0.5"/></svg>
<div style="top:238px;font-size:4.5px;color:#3434c4;left:309px;width:300px;text-align:center;transform-origin:50% 0;transform:translate(0.55px,0.45px) rotate(0.01deg) scaleX(1.027);"><span style="position:static">46.0</span></div>
<svg width="800" height="450" viewBox="0 0 800 450"><rect x="473.7" y="236.5" width="25.9" height="5.9" fill="#f3f3f3"/><path d="M473.95 242.4V236.75H499.6" fill="none" stroke="#adadad" stroke-width="0.5"/><path d="M474.2 242.15H499.35V237" fill="none" stroke="#fff" stroke-width="0.5"/></svg>
<div style="top:238px;font-size:4.5px;color:#3434c4;left:336px;width:300px;text-align:center;transform-origin:50% 0;transform:translate(0.7px,0.45px) rotate(0.01deg) scaleX(1.027);"><span style="position:static">50.0</span></div>
<svg width="800" height="450" viewBox="0 0 800 450"><rect x="500.85" y="236.5" width="25.9" height="5.9" fill="#f3f3f3"/><path d="M501.1 242.4V236.75H526.75" fill="none" stroke="#adadad" stroke-width="0.5"/><path d="M501.35 242.15H526.5V237" fill="none" stroke="#fff" stroke-width="0.5"/></svg>
<div style="top:238px;font-size:4.5px;color:#3434c4;left:363px;width:300px;text-align:center;transform-origin:50% 0;transform:translate(0.85px,0.45px) rotate(0.01deg) scaleX(1.027);"><span style="position:static">44.0</span></div>
<span style="top:245px;font-size:5.1px;color:#1c1c1c;right:384px;transform-origin:100% 0;transform:translate(-0.4px,0px) rotate(0.01deg) scaleX(0.863);">RAS# 到CAS#</span>
<svg width="800" height="450" viewBox="0 0 800 450"><rect x="419.4" y="244" width="25.9" height="5.9" fill="#f3f3f3"/><path d="M419.65 249.9V244.25H445.3" fill="none" stroke="#adadad" stroke-width="0.5"/><path d="M419.9 249.65H445.05V244.5" fill="none" stroke="#fff" stroke-width="0.5"/></svg>
<div style="top:245px;font-size:4.5px;color:#3434c4;left:282px;width:300px;text-align:center;transform-origin:50% 0;transform:translate(0.4px,0.95px) rotate(0.01deg) scaleX(0.997);"><span style="position:static">43</span></div>
<svg width="800" height="450" viewBox="0 0 800 450"><rect x="446.55" y="244" width="25.9" height="5.9" fill="#f3f3f3"/><path d="M446.8 249.9V244.25H472.45" fill="none" stroke="#adadad" stroke-width="0.5"/><path d="M447.05 249.65H472.2V244.5" fill="none" stroke="#fff" stroke-width="0.5"/></svg>
<div style="top:245px;font-size:4.5px;color:#3434c4;left:309px;width:300px;text-align:center;transform-origin:50% 0;transform:translate(0.55px,0.95px) rotate(0.01deg) scaleX(0.997);"><span style="position:static">46</span></div>
<svg width="800" height="450" viewBox="0 0 800 450"><rect x="473.7" y="244" width="25.9" height="5.9" fill="#f3f3f3"/><path d="M473.95 249.9V244.25H499.6" fill="none" stroke="#adadad" stroke-width="0.5"/><path d="M474.2 249.65H499.35V244.5" fill="none" stroke="#fff" stroke-width="0.5"/></svg>
<div style="top:245px;font-size:4.5px;color:#3434c4;left:336px;width:300px;text-align:center;transform-origin:50% 0;transform:translate(0.7px,0.95px) rotate(0.01deg) scaleX(0.997);"><span style="position:static">51</span></div>
<svg width="800" height="450" viewBox="0 0 800 450"><rect x="500.85" y="244" width="25.9" height="5.9" fill="#f3f3f3"/><path d="M501.1 249.9V244.25H526.75" fill="none" stroke="#adadad" stroke-width="0.5"/><path d="M501.35 249.65H526.5V244.5" fill="none" stroke="#fff" stroke-width="0.5"/></svg>
<div style="top:245px;font-size:4.5px;color:#3434c4;left:363px;width:300px;text-align:center;transform-origin:50% 0;transform:translate(0.85px,0.95px) rotate(0.01deg) scaleX(0.997);"><span style="position:static">54</span></div>
<span style="top:252px;font-size:5.1px;color:#1c1c1c;right:384px;transform-origin:100% 0;transform:translate(-0.4px,0.5px) rotate(0.01deg) scaleX(0.886);">RAS# 预充电</span>
<svg width="800" height="450" viewBox="0 0 800 450"><rect x="419.4" y="251.5" width="25.9" height="5.9" fill="#f3f3f3"/><path d="M419.65 257.4V251.75H445.3" fill="none" stroke="#adadad" stroke-width="0.5"/><path d="M419.9 257.15H445.05V252" fill="none" stroke="#fff" stroke-width="0.5"/></svg>
<div style="top:253px;font-size:4.5px;color:#3434c4;left:282px;width:300px;text-align:center;transform-origin:50% 0;transform:translate(0.4px,0.45px) rotate(0.01deg) scaleX(0.997);"><span style="position:static">43</span></div>
<svg width="800" height="450" viewBox="0 0 800 450"><rect x="446.55" y="251.5" width="25.9" height="5.9" fill="#f3f3f3"/><path d="M446.8 257.4V251.75H472.45" fill="none" stroke="#adadad" stroke-width="0.5"/><path d="M447.05 257.15H472.2V252" fill="none" stroke="#fff" stroke-width="0.5"/></svg>
<div style="top:253px;font-size:4.5px;color:#3434c4;left:309px;width:300px;text-align:center;transform-origin:50% 0;transform:translate(0.55px,0.45px) rotate(0.01deg) scaleX(0.997);"><span style="position:static">46</span></div>
<svg width="800" height="450" viewBox="0 0 800 450"><rect x="473.7" y="251.5" width="25.9" height="5.9" fill="#f3f3f3"/><path d="M473.95 257.4V251.75H499.6" fill="none" stroke="#adadad" stroke-width="0.5"/><path d="M474.2 257.15H499.35V252" fill="none" stroke="#fff" stroke-width="0.5"/></svg>
<div style="top:253px;font-size:4.5px;color:#3434c4;left:336px;width:300px;text-align:center;transform-origin:50% 0;transform:translate(0.7px,0.45px) rotate(0.01deg) scaleX(0.997);"><span style="position:static">51</span></div>
<svg width="800" height="450" viewBox="0 0 800 450"><rect x="500.85" y="251.5" width="25.9" height="5.9" fill="#f3f3f3"/><path d="M501.1 257.4V251.75H526.75" fill="none" stroke="#adadad" stroke-width="0.5"/><path d="M501.35 257.15H526.5V252" fill="none" stroke="#fff" stroke-width="0.5"/></svg>
<div style="top:253px;font-size:4.5px;color:#3434c4;left:363px;width:300px;text-align:center;transform-origin:50% 0;transform:translate(0.85px,0.45px) rotate(0.01deg) scaleX(0.997);"><span style="position:static">54</span></div>
<span style="top:260px;font-size:5.1px;color:#1c1c1c;right:384px;transform-origin:100% 0;transform:translate(-0.4px,0px) rotate(0.01deg) scaleX(0.879);">周期时间 (tRAS)</span>
<svg width="800" height="450" viewBox="0 0 800 450"><rect x="419.4" y="259" width="25.9" height="5.9" fill="#f3f3f3"/><path d="M419.65 264.9V259.25H445.3" fill="none" stroke="#adadad" stroke-width="0.5"/><path d="M419.9 264.65H445.05V259.5" fill="none" stroke="#fff" stroke-width="0.5"/></svg>
<div style="top:260px;font-size:4.5px;color:#3434c4;left:282px;width:300px;text-align:center;transform-origin:50% 0;transform:translate(0.4px,0.95px) rotate(0.01deg) scaleX(0.997);"><span style="position:static">85</span></div>
<svg width="800" height="450" viewBox="0 0 800 450"><rect x="446.55" y="259" width="25.9" height="5.9" fill="#f3f3f3"/><path d="M446.8 264.9V259.25H472.45" fill="none" stroke="#adadad" stroke-width="0.5"/><path d="M447.05 264.65H472.2V259.5" fill="none" stroke="#fff" stroke-width="0.5"/></svg>
<div style="top:260px;font-size:4.5px;color:#3434c4;left:309px;width:300px;text-align:center;transform-origin:50% 0;transform:translate(0.55px,0.95px) rotate(0.01deg) scaleX(0.997);"><span style="position:static">92</span></div>
<svg width="800" height="450" viewBox="0 0 800 450"><rect x="473.7" y="259" width="25.9" height="5.9" fill="#f3f3f3"/><path d="M473.95 264.9V259.25H499.6" fill="none" stroke="#adadad" stroke-width="0.5"/><path d="M474.2 264.65H499.35V259.5" fill="none" stroke="#fff" stroke-width="0.5"/></svg>
<div style="top:260px;font-size:4.5px;color:#3434c4;left:336px;width:300px;text-align:center;transform-origin:50% 0;transform:translate(0.7px,0.95px) rotate(0.01deg) scaleX(0.971);"><span style="position:static">101</span></div>
<svg width="800" height="450" viewBox="0 0 800 450"><rect x="500.85" y="259" width="25.9" height="5.9" fill="#f3f3f3"/><path d="M501.1 264.9V259.25H526.75" fill="none" stroke="#adadad" stroke-width="0.5"/><path d="M501.35 264.65H526.5V259.5" fill="none" stroke="#fff" stroke-width="0.5"/></svg>
<div style="top:260px;font-size:4.5px;color:#3434c4;left:363px;width:300px;text-align:center;transform-origin:50% 0;transform:translate(0.85px,0.95px) rotate(0.01deg) scaleX(0.971);"><span style="position:static">132</span></div>
<span style="top:267px;font-size:5.1px;color:#1c1c1c;right:384px;transform-origin:100% 0;transform:translate(-0.4px,0.5px) rotate(0.01deg) scaleX(0.901);">行周期时间 (tRC)</span>
<svg width="800" height="450" viewBox="0 0 800 450"><rect x="419.4" y="266.5" width="25.9" height="5.9" fill="#f3f3f3"/><path d="M419.65 272.4V266.75H445.3" fill="none" stroke="#adadad" stroke-width="0.5"/><path d="M419.9 272.15H445.05V267" fill="none" stroke="#fff" stroke-width="0.5"/></svg>
<div style="top:268px;font-size:4.5px;color:#3434c4;left:282px;width:300px;text-align:center;transform-origin:50% 0;transform:translate(0.4px,0.45px) rotate(0.01deg) scaleX(0.971);"><span style="position:static">127</span></div>
<svg width="800" height="450" viewBox="0 0 800 450"><rect x="446.55" y="266.5" width="25.9" height="5.9" fill="#f3f3f3"/><path d="M446.8 272.4V266.75H472.45" fill="none" stroke="#adadad" stroke-width="0.5"/><path d="M447.05 272.15H472.2V267" fill="none" stroke="#fff" stroke-width="0.5"/></svg>
<div style="top:268px;font-size:4.5px;color:#3434c4;left:309px;width:300px;text-align:center;transform-origin:50% 0;transform:translate(0.55px,0.45px) rotate(0.01deg) scaleX(0.971);"><span style="position:static">138</span></div>
<svg width="800" height="450" viewBox="0 0 800 450"><rect x="473.7" y="266.5" width="25.9" height="5.9" fill="#f3f3f3"/><path d="M473.95 272.4V266.75H499.6" fill="none" stroke="#adadad" stroke-width="0.5"/><path d="M474.2 272.15H499.35V267" fill="none" stroke="#fff" stroke-width="0.5"/></svg>
<div style="top:268px;font-size:4.5px;color:#3434c4;left:336px;width:300px;text-align:center;transform-origin:50% 0;transform:translate(0.7px,0.45px) rotate(0.01deg) scaleX(0.971);"><span style="position:static">151</span></div>
<svg width="800" height="450" viewBox="0 0 800 450"><rect x="500.85" y="266.5" width="25.9" height="5.9" fill="#f3f3f3"/><path d="M501.1 272.4V266.75H526.75" fill="none" stroke="#adadad" stroke-width="0.5"/><path d="M501.35 272.15H526.5V267" fill="none" stroke="#fff" stroke-width="0.5"/></svg>
<div style="top:268px;font-size:4.5px;color:#3434c4;left:363px;width:300px;text-align:center;transform-origin:50% 0;transform:translate(0.85px,0.45px) rotate(0.01deg) scaleX(0.971);"><span style="position:static">186</span></div>
<span style="top:275px;font-size:5.1px;color:#a3a3a3;right:384px;transform-origin:100% 0;transform:translate(-0.4px,0px) rotate(0.01deg) scaleX(0.860);">命令率 (CR)</span>
<svg width="800" height="450" viewBox="0 0 800 450"><rect x="419.4" y="274" width="25.9" height="5.9" fill="#f3f3f3"/><path d="M419.65 279.9V274.25H445.3" fill="none" stroke="#adadad" stroke-width="0.5"/><path d="M419.9 279.65H445.05V274.5" fill="none" stroke="#fff" stroke-width="0.5"/><rect x="446.55" y="274" width="25.9" height="5.9" fill="#f3f3f3"/><path d="M446.8 279.9V274.25H472.45" fill="none" stroke="#adadad" stroke-width="0.5"/><path d="M447.05 279.65H472.2V274.5" fill="none" stroke="#fff" stroke-width="0.5"/><rect x="473.7" y="274" width="25.9" height="5.9" fill="#f3f3f3"/><path d="M473.95 279.9V274.25H499.6" fill="none" stroke="#adadad" stroke-width="0.5"/><path d="M474.2 279.65H499.35V274.5" fill="none" stroke="#fff" stroke-width="0.5"/><rect x="500.85" y="274" width="25.9" height="5.9" fill="#f3f3f3"/><path d="M501.1 279.9V274.25H526.75" fill="none" stroke="#adadad" stroke-width="0.5"/><path d="M501.35 279.65H526.5V274.5" fill="none" stroke="#fff" stroke-width="0.5"/></svg>
<span style="top:282px;font-size:5.1px;color:#1c1c1c;right:384px;transform-origin:100% 0;transform:translate(-0.4px,0.5px) rotate(0.01deg) scaleX(0.921);">电压</span>
<svg width="800" height="450" viewBox="0 0 800 450"><rect x="419.4" y="281.5" width="25.9" height="5.9" fill="#f3f3f3"/><path d="M419.65 287.4V281.75H445.3" fill="none" stroke="#adadad" stroke-width="0.5"/><path d="M419.9 287.15H445.05V282" fill="none" stroke="#fff" stroke-width="0.5"/></svg>
<div style="top:283px;font-size:4.5px;color:#3434c4;left:282px;width:300px;text-align:center;transform-origin:50% 0;transform:translate(0.4px,0.45px) rotate(0.01deg) scaleX(0.960);"><span style="position:static">1.10 V</span></div>
<svg width="800" height="450" viewBox="0 0 800 450"><rect x="446.55" y="281.5" width="25.9" height="5.9" fill="#f3f3f3"/><path d="M446.8 287.4V281.75H472.45" fill="none" stroke="#adadad" stroke-width="0.5"/><path d="M447.05 287.15H472.2V282" fill="none" stroke="#fff" stroke-width="0.5"/></svg>
<div style="top:283px;font-size:4.5px;color:#3434c4;left:309px;width:300px;text-align:center;transform-origin:50% 0;transform:translate(0.55px,0.45px) rotate(0.01deg) scaleX(0.960);"><span style="position:static">1.10 V</span></div>
<svg width="800" height="450" viewBox="0 0 800 450"><rect x="473.7" y="281.5" width="25.9" height="5.9" fill="#f3f3f3"/><path d="M473.95 287.4V281.75H499.6" fill="none" stroke="#adadad" stroke-width="0.5"/><path d="M474.2 287.15H499.35V282" fill="none" stroke="#fff" stroke-width="0.5"/></svg>
<div style="top:283px;font-size:4.5px;color:#3434c4;left:336px;width:300px;text-align:center;transform-origin:50% 0;transform:translate(0.7px,0.45px) rotate(0.01deg) scaleX(0.960);"><span style="position:static">1.10 V</span></div>
<svg width="800" height="450" viewBox="0 0 800 450"><rect x="500.85" y="281.5" width="25.9" height="5.9" fill="#f3f3f3"/><path d="M501.1 287.4V281.75H526.75" fill="none" stroke="#adadad" stroke-width="0.5"/><path d="M501.35 287.15H526.5V282" fill="none" stroke="#fff" stroke-width="0.5"/></svg>
<div style="top:283px;font-size:4.5px;color:#3434c4;left:363px;width:300px;text-align:center;transform-origin:50% 0;transform:translate(0.85px,0.45px) rotate(0.01deg) scaleX(0.967);"><span style="position:static">1.450 V</span></div>
<svg width="800" height="450" viewBox="0 0 800 450"><rect x="541.4" y="139.9" width="255.6" height="103.7" rx="3.4" fill="#5a5a5a"/><rect x="541.7" y="140.2" width="255" height="103.1" rx="3" fill="#f0f0f0"/><rect x="541.7" y="140.2" width="255" height="12.2" rx="3" fill="#f3f3f3"/><rect x="541.7" y="146" width="255" height="6.4" fill="#f3f3f3"/><rect x="541.7" y="152.4" width="241.9" height="67.6" fill="#fff"/><rect x="541.7" y="219.8" width="255" height="0.5" fill="#c8c8c8"/><rect x="541.7" y="152.1" width="255" height="0.45" fill="#e4e4e4"/><svg x="545" y="142.4" width="7" height="7" viewBox="0 0 7 7"><rect width="6.6" height="6.6" rx="0.9" fill="#1f1f1f"/><path d="M0 0.9A0.9 0.9 0 0 1 0.9 0H5.7A0.9 0.9 0 0 1 6.6 0.9V3.9H0z" fill="#2a8ad4"/><path d="M1.7 1v2.6M3.3 1.6v2M4.9 2.6v1M1.7 4.7v1.3M3.3 4.7v1.3M4.9 4.7v1.3" stroke="#fff" stroke-width="0.8"/></svg></svg>
<span style="top:143px;font-size:5px;color:#8e8e8e;left:554px;transform-origin:0 0;transform:translate(0.2px,0.8px) rotate(0.01deg) scaleX(0.964);">HWiNFO® 64 v8.06-5500 - Sensors Status</span>
<svg width="800" height="450" viewBox="0 0 800 450"><svg x="745" y="140.6" width="50" height="10" viewBox="0 0 50 10">
<path d="M2.3 5h4.2" stroke="#9a9a9a" stroke-width="0.5"/>
<rect x="20.7" y="2.9" width="3.9" height="3.9" rx="0.4" stroke="#777" stroke-width="0.5" fill="none"/>
<path d="M40 3l3.9 3.9M43.9 3l-3.9 3.9" stroke="#777" stroke-width="0.5"/></svg></svg>
<span style="top:157px;font-size:4.6px;color:#2a2a2a;left:545px;transform-origin:0 0;transform:translate(0.2px,0.6px) rotate(0.01deg) scaleX(0.906);">Sensor</span>
<span style="top:157px;font-size:4.6px;color:#2a2a2a;right:124px;transform-origin:100% 0;transform:translate(-0.8px,0.6px) rotate(0.01deg) scaleX(1.005);">Current</span>
<span style="top:157px;font-size:4.6px;color:#2a2a2a;right:84px;transform-origin:100% 0;transform:translate(-0.8px,0.6px) rotate(0.01deg) scaleX(0.933);">Minimum</span>
<span style="top:157px;font-size:4.6px;color:#2a2a2a;left:720px;transform-origin:0 0;transform:translate(0px,0.6px) rotate(0.01deg) scaleX(0.991);">Maxim...</span>
<span style="top:157px;font-size:4.6px;color:#2a2a2a;right:19px;transform-origin:100% 0;transform:translate(-0px,0.6px) rotate(0.01deg) scaleX(0.986);">Average</span>
<svg width="800" height="450" viewBox="0 0 800 450"><rect x="606.4" y="152.8" width="0.5" height="10.4" fill="#e3e3e3"/><rect x="677.3" y="152.8" width="0.5" height="10.4" fill="#e3e3e3"/><rect x="717.4" y="152.8" width="0.5" height="10.4" fill="#e3e3e3"/><rect x="740.6" y="152.8" width="0.5" height="10.4" fill="#e3e3e3"/><rect x="559.2" y="163.4" width="224.4" height="7.08" fill="#e3e3e3"/><svg x="545.4" y="165.0" width="7" height="5" viewBox="0 0 7 5"><path d="M0.5 0.8l2.6 2.8l2.6-2.8" stroke="#666" stroke-width="0.55" fill="none"/></svg><svg x="553.4" y="163.9" width="4" height="7" viewBox="0 0 4 7"><rect x="0.3" y="0.2" width="3" height="6" rx="0.4" fill="#4a4a4a"/><rect x="0.9" y="0.8" width="1.8" height="4.6" fill="#7a7a7a"/></svg></svg>
<span style="top:165px;font-size:4.6px;color:#111;font-weight:bold;left:559px;transform-origin:0 0;transform:translate(0.9px,0.9px) rotate(0.01deg) scaleX(1.093);">DDR5 DIMM [#1] (BANK 0/DIMMA2)</span>
<svg width="800" height="450" viewBox="0 0 800 450"><rect x="541.7" y="170.48" width="241.9" height="7.08" fill="#f4f4f4"/><svg x="554.2" y="170.58" width="4" height="7" viewBox="0 0 4 7"><path d="M1.6 0.4v4.4" stroke="#d22" stroke-width="0.6"/><circle cx="1.6" cy="5.4" r="1" fill="#d22"/></svg></svg>
<span style="top:172px;font-size:4.6px;color:#222;left:559px;transform-origin:0 0;transform:translate(0.7px,0.8px) rotate(0.01deg) scaleX(0.943);">SPD Hub Temperature</span>
<span style="top:172px;font-size:4.6px;color:#222;right:124px;transform-origin:100% 0;transform:translate(-0.8px,0.8px) rotate(0.01deg) scaleX(1.021);">28.8 °C</span>
<span style="top:172px;font-size:4.6px;color:#222;right:84px;transform-origin:100% 0;transform:translate(-0.8px,0.8px) rotate(0.01deg) scaleX(1.021);">28.8 °C</span>
<span style="top:172px;font-size:4.6px;color:#222;right:62px;transform-origin:100% 0;transform:translate(-0.4px,0.8px) rotate(0.01deg) scaleX(1.021);">29.0 °C</span>
<span style="top:172px;font-size:4.6px;color:#222;right:19px;transform-origin:100% 0;transform:translate(-0px,0.8px) rotate(0.01deg) scaleX(1.021);">28.9 °C</span>
<svg width="800" height="450" viewBox="0 0 800 450"><svg x="553.6" y="177.66" width="4" height="7" viewBox="0 0 4 7"><path d="M2.3 0.1L0.5 3.7h1.2L0.9 6.8L3.4 2.8H2.1L3.3 0.1z" fill="#f5b81e" stroke="#e39a10" stroke-width="0.2"/></svg></svg>
<span style="top:179px;font-size:4.6px;color:#222;left:559px;transform-origin:0 0;transform:translate(0.7px,0.9px) rotate(0.01deg) scaleX(0.928);">VDD (SWA) Voltage</span>
<span style="top:179px;font-size:4.6px;color:#222;right:124px;transform-origin:100% 0;transform:translate(-0.8px,0.9px) rotate(0.01deg) scaleX(0.928);">1.455 V</span>
<span style="top:179px;font-size:4.6px;color:#222;right:84px;transform-origin:100% 0;transform:translate(-0.8px,0.9px) rotate(0.01deg) scaleX(0.928);">1.455 V</span>
<span style="top:179px;font-size:4.6px;color:#222;right:62px;transform-origin:100% 0;transform:translate(-0.4px,0.9px) rotate(0.01deg) scaleX(0.928);">1.455 V</span>
<span style="top:179px;font-size:4.6px;color:#222;right:19px;transform-origin:100% 0;transform:translate(-0px,0.9px) rotate(0.01deg) scaleX(0.928);">1.455 V</span>
<svg width="800" height="450" viewBox="0 0 800 450"><rect x="541.7" y="184.64" width="241.9" height="7.08" fill="#f4f4f4"/><rect x="606.8" y="184.64" width="70.6" height="7.08" fill="#cfe4fb"/><svg x="553.6" y="184.74" width="4" height="7" viewBox="0 0 4 7"><path d="M2.3 0.1L0.5 3.7h1.2L0.9 6.8L3.4 2.8H2.1L3.3 0.1z" fill="#f5b81e" stroke="#e39a10" stroke-width="0.2"/></svg></svg>
<span style="top:187px;font-size:4.6px;color:#222;left:559px;transform-origin:0 0;transform:translate(0.7px,0px) rotate(0.01deg) scaleX(0.917);">VDDQ (SWB) Voltage</span>
<span style="top:187px;font-size:4.6px;color:#222;right:124px;transform-origin:100% 0;transform:translate(-0.8px,0px) rotate(0.01deg) scaleX(0.928);">1.455 V</span>
<span style="top:187px;font-size:4.6px;color:#222;right:84px;transform-origin:100% 0;transform:translate(-0.8px,0px) rotate(0.01deg) scaleX(0.928);">1.455 V</span>
<span style="top:187px;font-size:4.6px;color:#222;right:62px;transform-origin:100% 0;transform:translate(-0.4px,0px) rotate(0.01deg) scaleX(0.928);">1.470 V</span>
<span style="top:187px;font-size:4.6px;color:#222;right:19px;transform-origin:100% 0;transform:translate(-0px,0px) rotate(0.01deg) scaleX(0.928);">1.464 V</span>
<svg width="800" height="450" viewBox="0 0 800 450"><svg x="553.6" y="191.82" width="4" height="7" viewBox="0 0 4 7"><path d="M2.3 0.1L0.5 3.7h1.2L0.9 6.8L3.4 2.8H2.1L3.3 0.1z" fill="#f5b81e" stroke="#e39a10" stroke-width="0.2"/></svg></svg>
<span style="top:194px;font-size:4.6px;color:#222;left:559px;transform-origin:0 0;transform:translate(0.7px,0.1px) rotate(0.01deg) scaleX(0.920);">VPP (SWC) Voltage</span>
<span style="top:194px;font-size:4.6px;color:#222;right:124px;transform-origin:100% 0;transform:translate(-0.8px,0.1px) rotate(0.01deg) scaleX(0.928);">1.800 V</span>
<span style="top:194px;font-size:4.6px;color:#222;right:84px;transform-origin:100% 0;transform:translate(-0.8px,0.1px) rotate(0.01deg) scaleX(0.928);">1.635 V</span>
<span style="top:194px;font-size:4.6px;color:#222;right:62px;transform-origin:100% 0;transform:translate(-0.4px,0.1px) rotate(0.01deg) scaleX(0.928);">1.815 V</span>
<span style="top:194px;font-size:4.6px;color:#222;right:19px;transform-origin:100% 0;transform:translate(-0px,0.1px) rotate(0.01deg) scaleX(0.928);">1.808 V</span>
<svg width="800" height="450" viewBox="0 0 800 450"><rect x="541.7" y="198.8" width="241.9" height="7.08" fill="#f4f4f4"/><svg x="553.6" y="198.9" width="4" height="7" viewBox="0 0 4 7"><path d="M2.3 0.1L0.5 3.7h1.2L0.9 6.8L3.4 2.8H2.1L3.3 0.1z" fill="#f5b81e" stroke="#e39a10" stroke-width="0.2"/></svg></svg>
<span style="top:201px;font-size:4.6px;color:#222;left:559px;transform-origin:0 0;transform:translate(0.7px,0.2px) rotate(0.01deg) scaleX(0.940);">1.8V Voltage</span>
<span style="top:201px;font-size:4.6px;color:#222;right:124px;transform-origin:100% 0;transform:translate(-0.8px,0.2px) rotate(0.01deg) scaleX(0.928);">1.815 V</span>
<span style="top:201px;font-size:4.6px;color:#222;right:84px;transform-origin:100% 0;transform:translate(-0.8px,0.2px) rotate(0.01deg) scaleX(0.928);">1.800 V</span>
<span style="top:201px;font-size:4.6px;color:#222;right:62px;transform-origin:100% 0;transform:translate(-0.4px,0.2px) rotate(0.01deg) scaleX(0.928);">1.815 V</span>
<span style="top:201px;font-size:4.6px;color:#222;right:19px;transform-origin:100% 0;transform:translate(-0px,0.2px) rotate(0.01deg) scaleX(0.928);">1.814 V</span>
<svg width="800" height="450" viewBox="0 0 800 450"><svg x="553.6" y="205.98" width="4" height="7" viewBox="0 0 4 7"><path d="M2.3 0.1L0.5 3.7h1.2L0.9 6.8L3.4 2.8H2.1L3.3 0.1z" fill="#f5b81e" stroke="#e39a10" stroke-width="0.2"/></svg></svg>
<span style="top:208px;font-size:4.6px;color:#222;left:559px;transform-origin:0 0;transform:translate(0.7px,0.3px) rotate(0.01deg) scaleX(0.925);">1.0V VOUT Voltage</span>
<span style="top:208px;font-size:4.6px;color:#222;right:124px;transform-origin:100% 0;transform:translate(-0.8px,0.3px) rotate(0.01deg) scaleX(0.928);">1.005 V</span>
<span style="top:208px;font-size:4.6px;color:#222;right:84px;transform-origin:100% 0;transform:translate(-0.8px,0.3px) rotate(0.01deg) scaleX(0.928);">0.975 V</span>
<span style="top:208px;font-size:4.6px;color:#222;right:62px;transform-origin:100% 0;transform:translate(-0.4px,0.3px) rotate(0.01deg) scaleX(0.928);">1.005 V</span>
<span style="top:208px;font-size:4.6px;color:#222;right:19px;transform-origin:100% 0;transform:translate(-0px,0.3px) rotate(0.01deg) scaleX(0.928);">0.997 V</span>
<svg width="800" height="450" viewBox="0 0 800 450"><rect x="541.7" y="212.96" width="241.9" height="7.08" fill="#f4f4f4"/><rect x="606.8" y="212.96" width="70.6" height="7.08" fill="#cfe4fb"/><svg x="553.6" y="213.06" width="4" height="7" viewBox="0 0 4 7"><path d="M2.3 0.1L0.5 3.7h1.2L0.9 6.8L3.4 2.8H2.1L3.3 0.1z" fill="#f5b81e" stroke="#e39a10" stroke-width="0.2"/></svg></svg>
<span style="top:215px;font-size:4.6px;color:#222;left:559px;transform-origin:0 0;transform:translate(0.7px,0.4px) rotate(0.01deg) scaleX(0.948);">VIN Voltage</span>
<span style="top:215px;font-size:4.6px;color:#222;right:124px;transform-origin:100% 0;transform:translate(-0.8px,0.4px) rotate(0.01deg) scaleX(0.928);">4.900 V</span>
<span style="top:215px;font-size:4.6px;color:#222;right:84px;transform-origin:100% 0;transform:translate(-0.8px,0.4px) rotate(0.01deg) scaleX(0.928);">4.620 V</span>
<span style="top:215px;font-size:4.6px;color:#222;right:62px;transform-origin:100% 0;transform:translate(-0.4px,0.4px) rotate(0.01deg) scaleX(0.928);">5.040 V</span>
<span style="top:215px;font-size:4.6px;color:#222;right:19px;transform-origin:100% 0;transform:translate(-0px,0.4px) rotate(0.01deg) scaleX(0.928);">4.933 V</span>
<svg width="800" height="450" viewBox="0 0 800 450"><rect x="792.1" y="187.2" width="0.9" height="8.2" rx="0.5" fill="#555"/><rect x="543" y="224" width="17" height="14.8" rx="1.8" fill="#fbfbfb" stroke="#e4e4e4" stroke-width="0.4"/><rect x="561" y="224" width="17" height="14.8" rx="1.8" fill="#fbfbfb" stroke="#e4e4e4" stroke-width="0.4"/><svg x="544.4" y="228.4" width="14" height="7" viewBox="0 0 14 7"><path d="M0.2 3.3L3 0.6V2.2H6V4.4H3V6z" fill="#1e86e0"/><path d="M13.4 3.3L10.6 0.6V2.2H7.4V4.4H10.6V6z" fill="#1e86e0"/></svg><svg x="562.6" y="228.4" width="14" height="7" viewBox="0 0 14 7"><path d="M6.2 3.3L3.4 0.8V2.3H0.6V4.3H3.4V5.8z" fill="#8fc4f2"/><path d="M6.8 3.3L9.6 0.8V2.3H12.4V4.3H9.6V5.8z" fill="#8fc4f2"/></svg><rect x="670.4" y="224" width="17.4" height="14.8" rx="1.8" fill="#fbfbfb" stroke="#e4e4e4" stroke-width="0.4"/><svg x="672" y="225" width="15" height="13" viewBox="0 0 15 13"><rect x="1" y="0.8" width="6.4" height="4.6" fill="#2d8fe6" stroke="#1c5fa8" stroke-width="0.5"/><path d="M2.6 6.6h3.2" stroke="#666" stroke-width="0.8"/><rect x="6.6" y="5.6" width="6.4" height="4.6" fill="#2d8fe6" stroke="#1c5fa8" stroke-width="0.5"/><path d="M8.2 11.4h3.2" stroke="#666" stroke-width="0.8"/><path d="M4 5.6v2.6h2.4" stroke="#3a3" stroke-width="0.5" fill="none"/></svg></svg>
<span style="top:229px;font-size:4.3px;color:#333;left:698px;transform-origin:0 0;transform:translate(0.2px,0.2px) rotate(0.01deg) scaleX(1.101);">0:01:34</span>
<svg width="800" height="450" viewBox="0 0 800 450"><rect x="716.4" y="224" width="17.4" height="14.8" rx="1.8" fill="#fbfbfb" stroke="#e4e4e4" stroke-width="0.4"/><rect x="735.8" y="224" width="17.4" height="14.8" rx="1.8" fill="#fbfbfb" stroke="#e4e4e4" stroke-width="0.4"/><rect x="755.2" y="224" width="17.4" height="14.8" rx="1.8" fill="#fbfbfb" stroke="#e4e4e4" stroke-width="0.4"/><rect x="774.4" y="224" width="17.4" height="14.8" rx="1.8" fill="#fbfbfb" stroke="#e4e4e4" stroke-width="0.4"/><svg x="718.2" y="224.4" width="14" height="14" viewBox="0 0 14 14"><circle cx="7" cy="7" r="5.6" fill="#fff" stroke="#333" stroke-width="0.7"/><path d="M7 3.2V7h2.6" stroke="#333" stroke-width="0.6" fill="none"/></svg><svg x="737.6" y="224.4" width="14" height="14" viewBox="0 0 14 14"><path d="M2.8 1.6h6l2 2v8.6h-8z" fill="#ececec" stroke="#9a9a9a" stroke-width="0.5"/><path d="M4 4.5h5.4M4 6.3h5.4M4 8.1h5.4" stroke="#c4c4c4" stroke-width="0.5"/><circle cx="10.6" cy="10.6" r="2.3" fill="#6cc04a"/><path d="M10.6 9.3v2.6M9.3 10.6h2.6" stroke="#fff" stroke-width="0.7"/></svg><svg x="756.8" y="224.4" width="14" height="14" viewBox="0 0 14 14"><g transform="translate(7 7)"><circle r="4.2" fill="none" stroke="#9aa0a6" stroke-width="2.2"/><g stroke="#9aa0a6" stroke-width="2.2"><path d="M0 -6.2V-4M0 6.2V4M-6.2 0H-4M6.2 0H4M-4.4 -4.4L-3 -3M4.4 4.4L3 3M-4.4 4.4L-3 3M4.4 -4.4L3 -3"/></g><circle r="2.4" fill="#f4f4f4" stroke="#7c8288" stroke-width="0.5"/></g></svg><svg x="776.2" y="224.4" width="14" height="14" viewBox="0 0 14 14"><path d="M2.6 2.8L11.4 11.2M11.4 2.8L2.6 11.2" stroke="#1e86e0" stroke-width="2.6"/></svg><svg x="6" y="2" width="22" height="22" viewBox="0 0 22 22"><defs><linearGradient id="rb" x1="0" y1="0" x2="1" y2="0"><stop offset="0" stop-color="#d9dde0"/><stop offset="0.5" stop-color="#f7f8f9"/><stop offset="1" stop-color="#cfd4d8"/></linearGradient></defs>
<path d="M2.4 2.6H17.6L16 20H4.2z" fill="url(#rb)"/><path d="M2.4 2.6H17.6L17.3 4.4H2.6z" fill="#eef0f2"/>
<g fill="none" stroke="#1a7fe0" stroke-width="1.5"><path d="M7.6 9.6L9.6 6.8L11.6 9.4"/><path d="M13.2 10.4L14.2 13.4L11 13.8"/><path d="M9 14L6.2 13.4L7 10.8"/></g></svg></svg>
<div class="lb" style="top:26px;font-size:5.2px;color:#fff;left:-135px;width:300px;text-align:center;transform-origin:50% 0;transform:translate(0.9px,0px) rotate(0.01deg) scaleX(0.937);"><span style="position:static">回收站</span></div>
<svg width="800" height="450" viewBox="0 0 800 450"><svg x="36" y="2" width="22" height="22" viewBox="0 0 22 22"><path d="M9.5 21C5.5 20 4.6 16 6.4 13C6.6 14.4 7.2 15 7.8 15.2C7 11.6 8.6 9 10.2 7.4C10 9.4 10.6 10.4 11.4 11C11.2 7 12 3.6 13.4 1C13.6 4.6 15.6 7 16 10.4C16.4 14 15.4 17 14.6 21z" fill="#f4801e"/>
<path d="M11.6 20.4C10.8 17 11.6 13 12.6 9.6C13.2 6.4 13.2 4 13.4 1C13.8 4.6 15.6 7 16 10.4C16.4 14 15.4 17 14.6 20.8z" fill="#e4401a"/>
<path d="M8.2 20.6C7 18.4 7.4 16 8.6 14.6C8.6 16.4 9.4 17 9.8 18.6C10 19.4 9.8 20 9.6 20.8z" fill="#fbb03a"/><g transform="translate(11.6 10.3) scale(1.0)"><path d="M0 1.2C1.8 1.1 3.4 0.6 4.5 0C5.6 0.6 7.2 1.1 9 1.2V4.6C9 7.2 7 8.9 4.5 10C2 8.9 0 7.2 0 4.6z" fill="#2b8fe0"/><path d="M4.5 0C5.6 0.6 7.2 1.1 9 1.2V4.8H4.5z" fill="#f8c41c"/><path d="M0 4.8H4.5V10C2 8.9 0 7.2 0 4.8z" fill="#f8c41c"/></g><g transform="translate(0.8 15.0)"><rect width="5.8" height="5.8" rx="0.4" fill="#f4f6f8"/><path d="M1.4 4.6C1.5 3.2 2.4 2.5 3.5 2.5V1.5L4.9 2.9L3.5 4.2V3.3C2.6 3.3 1.9 3.7 1.4 4.6z" fill="#1b6fd0"/></g></svg></svg>
<div class="lb" style="top:26px;font-size:5.2px;color:#fff;left:-103px;width:300px;text-align:center;transform-origin:50% 0;transform:translate(0.7px,0px) rotate(0.01deg) scaleX(1.032);"><span style="position:static">BurnInTest</span></div>
<svg width="800" height="450" viewBox="0 0 800 450"><svg x="5" y="43.6" width="22" height="22" viewBox="0 0 22 22"><defs><linearGradient id="e1" x1="0" y1="0" x2="1" y2="1"><stop offset="0" stop-color="#2fc2df"/><stop offset="0.6" stop-color="#36c77a"/><stop offset="1" stop-color="#6fd24f"/></linearGradient>
<linearGradient id="e2" x1="0" y1="0" x2="0" y2="1"><stop offset="0" stop-color="#1b8fd8"/><stop offset="1" stop-color="#0c56a8"/></linearGradient></defs>
<circle cx="11.2" cy="11" r="10.2" fill="url(#e2)"/>
<path d="M1 11C1 5 5.5 0.8 11.2 0.8C17 0.8 21.4 5 21.4 10.2C21.4 13.2 19.2 14.8 17 14.8L13.4 14.8C14.2 13.4 14.6 12 14.2 10.4C13.6 8 11.8 6.6 9.4 6.6C5.6 6.6 2 9 1 11z" fill="url(#e1)"/>
<path d="M8.6 13.4C8.6 11 9.8 9.4 10.8 8.8C8 8.8 5.4 10.8 5.4 14C5.4 18 8.6 21.2 12.6 21.2C15.8 21.2 18.2 19.6 19.8 17.2C18.4 18 16.8 18.4 15 18.2C11.6 18 8.6 16.2 8.6 13.4z" fill="#0a4a96"/>
<circle cx="12.3" cy="11.7" r="2.5" fill="#05070a"/>
<path d="M11.6 13.8C14 15 18 15.2 21.2 13.2L20.6 15.6C18 17 14.4 16.6 11.6 13.8z" fill="#05070a"/><g transform="translate(0.8 15.0)"><rect width="5.8" height="5.8" rx="0.4" fill="#f4f6f8"/><path d="M1.4 4.6C1.5 3.2 2.4 2.5 3.5 2.5V1.5L4.9 2.9L3.5 4.2V3.3C2.6 3.3 1.9 3.7 1.4 4.6z" fill="#1b6fd0"/></g></svg></svg>
<div class="lb" style="top:68px;font-size:5.2px;color:#fff;left:-135px;width:300px;text-align:center;transform-origin:50% 0;transform:translate(0.9px,0.3px) rotate(0.01deg) scaleX(1.021);"><span style="position:static">Microsoft</span></div>
<div class="lb" style="top:75px;font-size:5.2px;color:#fff;left:-135px;width:300px;text-align:center;transform-origin:50% 0;transform:translate(0.9px,0px) rotate(0.01deg) scaleX(0.866);"><span style="position:static">Edge</span></div>
<svg width="800" height="450" viewBox="0 0 800 450"><svg x="36.6" y="43.6" width="22" height="22" viewBox="0 0 22 22"><defs><linearGradient id="pm" x1="0" y1="0" x2="0.4" y2="1"><stop offset="0" stop-color="#ff9a1e"/><stop offset="0.55" stop-color="#f0401e"/><stop offset="1" stop-color="#e81ea0"/></linearGradient></defs>
<path d="M10.4 18.6C7.4 16.4 7.4 11 10.6 8.4C11.4 9.2 11.6 9.2 12 8C12.6 5.6 14.6 3.8 17 2.2C16.4 4.2 17.4 5 17.6 6.2C18.4 5.4 18.6 4.8 19 4.2C19.4 7 19 9 18.2 11.4C17.6 14.6 16.4 18 14.4 19.6C13 20.4 11.4 19.6 10.4 18.6z" fill="url(#pm)"/>
<circle cx="12.4" cy="11.4" r="1.1" fill="#fff"/><circle cx="15.2" cy="11" r="1.1" fill="#fff"/><ellipse cx="14" cy="15.2" rx="1.3" ry="1.7" fill="#7a1010"/>
<circle cx="5.6" cy="10.6" r="2.6" fill="#b9a2f0"/><path d="M6.8 12.6L9.4 18" stroke="#7aa7e8" stroke-width="1.6"/><path d="M9.2 17.4L10.6 20.2" stroke="#e0702a" stroke-width="1.2"/><g transform="translate(0.8 15.0)"><rect width="5.8" height="5.8" rx="0.4" fill="#f4f6f8"/><path d="M1.4 4.6C1.5 3.2 2.4 2.5 3.5 2.5V1.5L4.9 2.9L3.5 4.2V3.3C2.6 3.3 1.9 3.7 1.4 4.6z" fill="#1b6fd0"/></g></svg></svg>
<div class="lb" style="top:68px;font-size:5.2px;color:#fff;left:-103px;width:300px;text-align:center;transform-origin:50% 0;transform:translate(0.7px,0.3px) rotate(0.01deg) scaleX(0.991);"><span style="position:static">PowerMe...</span></div>
<div class="lb" style="top:75px;font-size:5.2px;color:#fff;left:-103px;width:300px;text-align:center;transform-origin:50% 0;transform:translate(0.7px,0px) rotate(0.01deg) scaleX(0.982);"><span style="position:static">- 快捷方式</span></div>
<svg width="800" height="450" viewBox="0 0 800 450"><svg x="6.6" y="88.2" width="19" height="15" viewBox="0 0 19 15"><defs><linearGradient id="f1" x1="0" y1="0" x2="0" y2="1"><stop offset="0" stop-color="#fbd667"/><stop offset="1" stop-color="#f3bb2c"/></linearGradient></defs>
<path d="M0.6 1.2C0.6 0.7 1 0.4 1.4 0.4H6.4L8.2 2.2H17.2C17.7 2.2 18 2.5 18 3V4H0.6z" fill="#e8a820"/>
<path d="M0.6 3.4H18V13.8C18 14.3 17.7 14.6 17.2 14.6H1.4C1 14.6 0.6 14.3 0.6 13.8z" fill="url(#f1)"/><path d="M0.6 3.2H18V4.2H0.6z" fill="#fce28e"/><g fill="none" stroke-width="1.7"><path d="M5 8.2C5.2 6.4 6.6 5.2 8.6 5" stroke="#e22b2b"/><path d="M8.6 5C11.4 4.8 13.2 6 14 8" stroke="#2366d8"/><path d="M7 8.2C7.6 7 8.8 6.6 10 6.8" stroke="#22a845"/></g></svg></svg>
<div class="lb" style="top:109px;font-size:5.2px;color:#fff;left:-135px;width:300px;text-align:center;transform-origin:50% 0;transform:translate(0.9px,0.2px) rotate(0.01deg) scaleX(0.884);"><span style="position:static">TOOL</span></div>
<svg width="800" height="450" viewBox="0 0 800 450"><svg x="8.6" y="128.6" width="14" height="11" viewBox="0 0 14 11"><path d="M0.4 0.4H7.6L13.6 4.4V12H0.4z" fill="#f4f4f4"/><path d="M7.6 0.4V4.4H13.6z" fill="#cfd3d6"/></svg><rect x="190" y="2" width="32" height="30.6" rx="0.8" fill="#2b2b2b"/><svg x="194.8" y="2" width="22" height="22" viewBox="0 0 22 22"><path d="M20.2 10.8 L20.1 11.7 L19.8 12.6 L19.2 13.5 L18.5 14.4 L17.6 15.2 L16.5 16.0 L15.3 16.7 L14.0 17.3 L12.6 17.9 L11.2 18.4 L9.8 18.8 L8.4 19.2 L7.1 19.4 L5.9 19.6 L4.8 19.6 L3.9 19.6 L3.2 19.4 L2.6 19.2 L2.3 18.8 L2.2 18.4 L2.3 17.9 L2.6 17.3 L3.2 16.7 L3.9 16.0 L4.8 15.2 L5.9 14.4 L7.1 13.5 L8.4 12.6 L9.8 11.7 L11.2 10.8 L12.6 9.9 L14.0 9.0 L15.3 8.1 L16.5 7.2 L17.6 6.4 L18.5 5.6 L19.2 4.9 L19.8 4.3 L20.1 3.7 L20.2 3.2 L20.1 2.8 L19.8 2.4 L19.2 2.2 L18.5 2.0 L17.6 2.0 L16.5 2.0 L15.3 2.2 L14.0 2.4 L12.6 2.8 L11.2 3.2 L9.8 3.7 L8.4 4.3 L7.1 4.9 L5.9 5.6 L4.8 6.4 L3.9 7.2 L3.2 8.1 L2.6 9.0 L2.3 9.9 L2.2 10.8 L2.3 11.7 L2.6 12.6 L3.2 13.5 L3.9 14.4 L4.8 15.2 L5.9 16.0 L7.1 16.7 L8.4 17.3 L9.8 17.9 L11.2 18.4 L12.6 18.8 L14.0 19.2 L15.3 19.4 L16.5 19.6 L17.6 19.6 L18.5 19.6 L19.2 19.4 L19.8 19.2 L20.1 18.8 L20.2 18.4 L20.1 17.9 L19.8 17.3 L19.2 16.7 L18.5 16.0 L17.6 15.2 L16.5 14.4 L15.3 13.5 L14.0 12.6 L12.6 11.7 L11.2 10.8 L9.8 9.9 L8.4 9.0 L7.1 8.1 L5.9 7.2 L4.8 6.4 L3.9 5.6 L3.2 4.9 L2.6 4.3 L2.3 3.7 L2.2 3.2 L2.3 2.8 L2.6 2.4 L3.2 2.2 L3.9 2.0 L4.8 2.0 L5.9 2.0 L7.1 2.2 L8.4 2.4 L9.8 2.8 L11.2 3.2 L12.6 3.7 L14.0 4.3 L15.3 4.9 L16.5 5.6 L17.6 6.4 L18.5 7.2 L19.2 8.1 L19.8 9.0 L20.1 9.9 L20.2 10.8z" fill="none" stroke="#cc1212" stroke-width="1.15" stroke-linejoin="round"/></svg></svg>
<div class="lb" style="top:26px;font-size:5.2px;color:#fff;left:55px;width:300px;text-align:center;transform-origin:50% 0;transform:translate(0.8px,0px) rotate(0.01deg) scaleX(1.027);"><span style="position:static">snapshot1</span></div>
<svg width="800" height="450" viewBox="0 0 800 450"><svg x="228.4" y="5.2" width="19" height="15" viewBox="0 0 19 15"><defs><linearGradient id="f2" x1="0" y1="0" x2="0" y2="1"><stop offset="0" stop-color="#fbd667"/><stop offset="1" stop-color="#f3bb2c"/></linearGradient></defs>
<path d="M0.6 1.2C0.6 0.7 1 0.4 1.4 0.4H6.4L8.2 2.2H17.2C17.7 2.2 18 2.5 18 3V4H0.6z" fill="#e8a820"/>
<path d="M0.6 3.4H18V13.8C18 14.3 17.7 14.6 17.2 14.6H1.4C1 14.6 0.6 14.3 0.6 13.8z" fill="url(#f2)"/><path d="M6.6 4.6H10.4L12.6 6.2V9.4H6.6z" fill="#f2f2f2" opacity="0.95"/></svg></svg>
<div class="lb" style="top:26px;font-size:5.2px;color:#fff;left:87px;width:300px;text-align:center;transform-origin:50% 0;transform:translate(0.5px,0px) rotate(0.01deg) scaleX(0.986);"><span style="position:static">TMS</span></div>
<svg width="800" height="450" viewBox="0 0 800 450"><svg x="258.4" y="2" width="22" height="22" viewBox="0 0 22 22"><rect x="0.6" y="0.8" width="20.4" height="20.6" fill="#0b1212"/><rect x="5.2" y="3.4" width="11" height="8.6" rx="0.8" fill="none" stroke="#c8c8c8" stroke-width="0.8"/><path d="M7 10.6C7.6 7.4 14 7.4 14.8 10.6" stroke="#e8e8e8" stroke-width="1.2" fill="none"/><path d="M2 12L5 10.6L9.4 16L7 18.4z" fill="#f4f4f4"/><path d="M6 14.6L11 16.6" stroke="#ddd" stroke-width="1.2"/><g transform="translate(11.6 10.3) scale(1.0)"><path d="M0 1.2C1.8 1.1 3.4 0.6 4.5 0C5.6 0.6 7.2 1.1 9 1.2V4.6C9 7.2 7 8.9 4.5 10C2 8.9 0 7.2 0 4.6z" fill="#2b8fe0"/><path d="M4.5 0C5.6 0.6 7.2 1.1 9 1.2V4.8H4.5z" fill="#f8c41c"/><path d="M0 4.8H4.5V10C2 8.9 0 7.2 0 4.8z" fill="#f8c41c"/></g><g transform="translate(0.8 15.0)"><rect width="5.8" height="5.8" rx="0.4" fill="#f4f6f8"/><path d="M1.4 4.6C1.5 3.2 2.4 2.5 3.5 2.5V1.5L4.9 2.9L3.5 4.2V3.3C2.6 3.3 1.9 3.7 1.4 4.6z" fill="#1b6fd0"/></g></svg></svg>
<div class="lb" style="top:26px;font-size:5.2px;color:#fff;left:119px;width:300px;text-align:center;transform-origin:50% 0;transform:translate(0.2px,0px) rotate(0.01deg) scaleX(1.013);"><span style="position:static">Performa...</span></div>
<svg width="800" height="450" viewBox="0 0 800 450"><svg x="290.2" y="2" width="22" height="22" viewBox="0 0 22 22"><rect x="0.6" y="0.8" width="20.4" height="20.6" fill="#252525"/><path d="M3.6 3.4H7.4C9.6 3.4 10 5 10 6.6C10 8.4 9.4 9.4 8.4 9.8C9.6 10.2 10.2 11.4 10.2 13.4C10.2 16 9.4 17.6 7.4 17.6H3.6z" fill="#fff"/><path d="M6 5.6V8.8M6 11.4V15.4" stroke="#252525" stroke-width="1.2"/><path d="M11.4 17.4V3.4H13.4L15 9.4L16.6 3.4H18.6V17.4L16.8 19.8V9.4L15 14.4L13.2 9.4V17.4z" fill="#f2bd1a"/><g transform="translate(11.6 10.3) scale(1.0)"><path d="M0 1.2C1.8 1.1 3.4 0.6 4.5 0C5.6 0.6 7.2 1.1 9 1.2V4.6C9 7.2 7 8.9 4.5 10C2 8.9 0 7.2 0 4.6z" fill="#2b8fe0"/><path d="M4.5 0C5.6 0.6 7.2 1.1 9 1.2V4.8H4.5z" fill="#f8c41c"/><path d="M0 4.8H4.5V10C2 8.9 0 7.2 0 4.8z" fill="#f8c41c"/></g><g transform="translate(0.8 15.0)"><rect width="5.8" height="5.8" rx="0.4" fill="#f4f6f8"/><path d="M1.4 4.6C1.5 3.2 2.4 2.5 3.5 2.5V1.5L4.9 2.9L3.5 4.2V3.3C2.6 3.3 1.9 3.7 1.4 4.6z" fill="#1b6fd0"/></g></svg></svg>
<div class="lb" style="top:26px;font-size:5.2px;color:#fff;left:150px;width:300px;text-align:center;transform-origin:50% 0;transform:translate(0.8px,0px) rotate(0.01deg) scaleX(1.013);"><span style="position:static">BenchMate</span></div>
<svg width="800" height="450" viewBox="0 0 800 450"><svg x="321.8" y="2" width="22" height="22" viewBox="0 0 22 22"><rect x="0.6" y="0.8" width="20.6" height="20.6" fill="#c40f12"/><g transform="translate(11.6 10.3) scale(1.0)"><path d="M0 1.2C1.8 1.1 3.4 0.6 4.5 0C5.6 0.6 7.2 1.1 9 1.2V4.6C9 7.2 7 8.9 4.5 10C2 8.9 0 7.2 0 4.6z" fill="#2b8fe0"/><path d="M4.5 0C5.6 0.6 7.2 1.1 9 1.2V4.8H4.5z" fill="#f8c41c"/><path d="M0 4.8H4.5V10C2 8.9 0 7.2 0 4.8z" fill="#f8c41c"/></g><g transform="translate(0.8 15.0)"><rect width="5.8" height="5.8" rx="0.4" fill="#f4f6f8"/><path d="M1.4 4.6C1.5 3.2 2.4 2.5 3.5 2.5V1.5L4.9 2.9L3.5 4.2V3.3C2.6 3.3 1.9 3.7 1.4 4.6z" fill="#1b6fd0"/></g></svg></svg>
<div style="top:5px;font-size:17px;color:#fff;font-weight:bold;left:183px;width:300px;text-align:center;transform-origin:50% 0;transform:translate(0px,0px) rotate(0.01deg) scaleX(0.898);"><span style="position:static">64</span></div>
<svg width="800" height="450" viewBox="0 0 800 450"><svg x="321.8" y="2" width="22" height="22" viewBox="0 0 22 22"><g transform="translate(11.6 10.3) scale(1.0)"><path d="M0 1.2C1.8 1.1 3.4 0.6 4.5 0C5.6 0.6 7.2 1.1 9 1.2V4.6C9 7.2 7 8.9 4.5 10C2 8.9 0 7.2 0 4.6z" fill="#2b8fe0"/><path d="M4.5 0C5.6 0.6 7.2 1.1 9 1.2V4.8H4.5z" fill="#f8c41c"/><path d="M0 4.8H4.5V10C2 8.9 0 7.2 0 4.8z" fill="#f8c41c"/></g><g transform="translate(0.8 15.0)"><rect width="5.8" height="5.8" rx="0.4" fill="#f4f6f8"/><path d="M1.4 4.6C1.5 3.2 2.4 2.5 3.5 2.5V1.5L4.9 2.9L3.5 4.2V3.3C2.6 3.3 1.9 3.7 1.4 4.6z" fill="#1b6fd0"/></g></svg></svg>
<div class="lb" style="top:26px;font-size:5.2px;color:#fff;left:182px;width:300px;text-align:center;transform-origin:50% 0;transform:translate(0.5px,0px) rotate(0.01deg) scaleX(1.040);"><span style="position:static">aida64 - 快</span></div>
<div class="lb" style="top:32px;font-size:5.2px;color:#fff;left:182px;width:300px;text-align:center;transform-origin:50% 0;transform:translate(0.5px,0.8px) rotate(0.01deg) scaleX(0.937);"><span style="position:static">捷方式</span></div>
<svg width="800" height="450" viewBox="0 0 800 450"><svg x="353.4" y="2" width="22" height="22" viewBox="0 0 22 22"><defs><radialGradient id="rm" cx="0.45" cy="0.3" r="0.7"><stop offset="0" stop-color="#6a6a6a"/><stop offset="0.5" stop-color="#2e2e2e"/><stop offset="1" stop-color="#0c0c0c"/></radialGradient></defs>
<circle cx="11.2" cy="10.6" r="9.6" fill="url(#rm)" stroke="#3c3c3c" stroke-width="0.5"/><g fill="#c9c9c9" opacity="0.85"><circle cx="11" cy="7.4" r="1.8"/><circle cx="13.4" cy="10.4" r="1.6"/><circle cx="11.4" cy="12.8" r="1.5"/><circle cx="13.6" cy="14.6" r="1.3"/></g><g transform="translate(0.8 15.0)"><rect width="5.8" height="5.8" rx="0.4" fill="#f4f6f8"/><path d="M1.4 4.6C1.5 3.2 2.4 2.5 3.5 2.5V1.5L4.9 2.9L3.5 4.2V3.3C2.6 3.3 1.9 3.7 1.4 4.6z" fill="#1b6fd0"/></g></svg></svg>
<div class="lb" style="top:26px;font-size:5.2px;color:#fff;left:214px;width:300px;text-align:center;transform-origin:50% 0;transform:translate(0.2px,0px) rotate(0.01deg) scaleX(1.029);"><span style="position:static">RunMemt...</span></div>
<div class="lb" style="top:32px;font-size:5.2px;color:#fff;left:214px;width:300px;text-align:center;transform-origin:50% 0;transform:translate(0.2px,0.8px) rotate(0.01deg) scaleX(0.982);"><span style="position:static">- 快捷方式</span></div>
<svg width="800" height="450" viewBox="0 0 800 450"><svg x="385.2" y="2" width="22" height="22" viewBox="0 0 22 22"><path d="M10.8 0.8L19.2 5.4V16.6L10.8 21.4L2.4 16.6V5.4z" fill="#1f7a35"/><path d="M10.8 0.8L19.2 5.4V11H2.4V5.4z" fill="#258a3e"/><path d="M4.6 11.6H7.4L8.8 5.8L10.8 15L12.2 10.4H14" stroke="#fff" stroke-width="1.1" fill="none"/><g transform="translate(11.6 10.3) scale(1.0)"><path d="M0 1.2C1.8 1.1 3.4 0.6 4.5 0C5.6 0.6 7.2 1.1 9 1.2V4.6C9 7.2 7 8.9 4.5 10C2 8.9 0 7.2 0 4.6z" fill="#2b8fe0"/><path d="M4.5 0C5.6 0.6 7.2 1.1 9 1.2V4.8H4.5z" fill="#f8c41c"/><path d="M0 4.8H4.5V10C2 8.9 0 7.2 0 4.8z" fill="#f8c41c"/></g><g transform="translate(0.8 15.0)"><rect width="5.8" height="5.8" rx="0.4" fill="#f4f6f8"/><path d="M1.4 4.6C1.5 3.2 2.4 2.5 3.5 2.5V1.5L4.9 2.9L3.5 4.2V3.3C2.6 3.3 1.9 3.7 1.4 4.6z" fill="#1b6fd0"/></g></svg></svg>
<div class="lb" style="top:26px;font-size:5.2px;color:#fff;left:245px;width:300px;text-align:center;transform-origin:50% 0;transform:translate(0.8px,0px) rotate(0.01deg) scaleX(1.041);"><span style="position:static">ZenTimings</span></div>
<div class="lb" style="top:32px;font-size:5.2px;color:#fff;left:245px;width:300px;text-align:center;transform-origin:50% 0;transform:translate(0.8px,0.8px) rotate(0.01deg) scaleX(0.982);"><span style="position:static">- 快捷方式</span></div>
<svg width="800" height="450" viewBox="0 0 800 450"><svg x="416.6" y="2" width="22" height="22" viewBox="0 0 22 22"><rect x="0.8" y="0.8" width="20.6" height="20.6" fill="#00ee00"/></svg></svg>
<span style="top:10px;font-size:10px;color:#1212e6;font-weight:bold;left:418px;transform-origin:0 0;transform:translate(0.4px,0.4px) rotate(0.01deg);font-family:'Liberation Serif',serif;">2</span>
<span style="top:5px;font-size:9px;color:#1212e6;font-weight:bold;left:424px;transform-origin:0 0;transform:translate(0.4px,0.6px) rotate(0.01deg);font-family:'Liberation Serif',serif;">P</span>
<span style="top:11px;font-size:10px;color:#1212e6;font-weight:bold;left:426px;transform-origin:0 0;transform:translate(0.4px,0.2px) rotate(0.01deg) scaleX(0.953);font-family:'Liberation Serif',serif;">−1</span>
<svg width="800" height="450" viewBox="0 0 800 450"><svg x="416.6" y="2" width="22" height="22" viewBox="0 0 22 22"><g transform="translate(0.8 15.0)"><rect width="5.8" height="5.8" rx="0.4" fill="#f4f6f8"/><path d="M1.4 4.6C1.5 3.2 2.4 2.5 3.5 2.5V1.5L4.9 2.9L3.5 4.2V3.3C2.6 3.3 1.9 3.7 1.4 4.6z" fill="#1b6fd0"/></g></svg></svg>
<div class="lb" style="top:26px;font-size:5.2px;color:#fff;left:277px;width:300px;text-align:center;transform-origin:50% 0;transform:translate(0.5px,0px) rotate(0.01deg) scaleX(1.049);"><span style="position:static">prime95 -</span></div>
<div class="lb" style="top:32px;font-size:5.2px;color:#fff;left:277px;width:300px;text-align:center;transform-origin:50% 0;transform:translate(0.5px,0.8px) rotate(0.01deg) scaleX(0.939);"><span style="position:static">快捷方式</span></div>
<svg width="800" height="450" viewBox="0 0 800 450"><svg x="670.4" y="2" width="22" height="22" viewBox="0 0 22 22"><rect x="0.8" y="0.8" width="20" height="19.8" rx="2.6" fill="#1d1d1d"/><path d="M0.8 3.4A2.6 2.6 0 0 1 3.4 0.8H18.2A2.6 2.6 0 0 1 20.8 3.4V12.4H0.8z" fill="#2190dc"/>
<path d="M6 3V11M10.8 5.4V11M6 14V19.4M10.8 14V19.4" stroke="#fff" stroke-width="2.6"/><circle cx="14.8" cy="9.6" r="1.3" fill="#fff"/><g transform="translate(11.6 10.3) scale(1.0)"><path d="M0 1.2C1.8 1.1 3.4 0.6 4.5 0C5.6 0.6 7.2 1.1 9 1.2V4.6C9 7.2 7 8.9 4.5 10C2 8.9 0 7.2 0 4.6z" fill="#2b8fe0"/><path d="M4.5 0C5.6 0.6 7.2 1.1 9 1.2V4.8H4.5z" fill="#f8c41c"/><path d="M0 4.8H4.5V10C2 8.9 0 7.2 0 4.8z" fill="#f8c41c"/></g></svg></svg>
<div class="lb" style="top:26px;font-size:5.2px;color:#fff;left:530px;width:300px;text-align:center;transform-origin:50% 0;transform:translate(0.8px,0px) rotate(0.01deg) scaleX(0.981);"><span style="position:static">HWiNFO64</span></div>
<svg width="800" height="450" viewBox="0 0 800 450"><svg x="701.6" y="2" width="22" height="22" viewBox="0 0 22 22"><rect x="0.8" y="0.8" width="20.4" height="20.4" fill="#4a1d92"/><rect x="5" y="5" width="12" height="12" rx="1.4" fill="none" stroke="#cdb9f2" stroke-width="0.9"/><rect x="8.8" y="8.8" width="4.4" height="4.4" rx="0.8" fill="#f2ecff"/>
<g stroke="#bfa8ec" stroke-width="0.7"><path d="M7 2.6V5M9 2.6V5M11 2.6V5M13 2.6V5M15 2.6V5M7 17V19.4M9 17V19.4M11 17V19.4M13 17V19.4M15 17V19.4M2.6 7H5M2.6 9H5M2.6 11H5M2.6 13H5M2.6 15H5M17 7H19.4M17 9H19.4M17 11H19.4M17 13H19.4M17 15H19.4"/></g><g transform="translate(11.6 10.3) scale(1.0)"><path d="M0 1.2C1.8 1.1 3.4 0.6 4.5 0C5.6 0.6 7.2 1.1 9 1.2V4.6C9 7.2 7 8.9 4.5 10C2 8.9 0 7.2 0 4.6z" fill="#2b8fe0"/><path d="M4.5 0C5.6 0.6 7.2 1.1 9 1.2V4.8H4.5z" fill="#f8c41c"/><path d="M0 4.8H4.5V10C2 8.9 0 7.2 0 4.8z" fill="#f8c41c"/></g></svg></svg>
<div class="lb" style="top:26px;font-size:5.2px;color:#fff;left:562px;width:300px;text-align:center;transform-origin:50% 0;transform:translate(0.5px,0px) rotate(0.01deg) scaleX(0.963);"><span style="position:static">cpuz_x64</span></div>
<svg width="800" height="450" viewBox="0 0 800 450"><svg x="5.6" y="385" width="20" height="13" viewBox="0 0 20 13"><rect x="0.4" y="0.6" width="19" height="11.4" fill="#050505"/><rect x="0.6" y="4" width="4.6" height="7.2" fill="#f0f0f0"/><rect x="5.4" y="4" width="13.6" height="2.8" fill="#e8e8e8"/><rect x="5.4" y="4" width="8" height="4" fill="#dedede"/><rect x="0.6" y="11.2" width="18.8" height="0.7" fill="#cfcfcf"/><rect x="5" y="8" width="1" height="1.4" fill="#22f"/><rect x="6" y="1.4" width="5" height="0.5" fill="#5a5"/><rect x="13.4" y="2.2" width="3" height="0.6" fill="#a6c"/></svg></svg>
<div class="lb" style="top:401px;font-size:5.2px;color:#fff;left:-135px;width:300px;text-align:center;transform-origin:50% 0;transform:translate(0.9px,0.2px) rotate(0.01deg) scaleX(1.000);"><span style="position:static">snapshot...</span></div>
<div style="left:509px;transform:translate(0.7px,0.3px) rotate(0.01deg);top:47px;font-size:45.4px;font-weight:bold;font-style:italic;color:#fff;-webkit-text-stroke:1.7px #fff;letter-spacing:0"><span style="position:static;display:inline-block;width:33.4px;transform:scaleX(1.05);transform-origin:0 100%;">B</span><span style="position:static;display:inline-block;width:17.4px;transform:scaleX(1.0);transform-origin:0 100%;">i</span><span style="position:static;display:inline-block;width:34.8px;transform:scaleX(1.17);transform-origin:0 100%;">w</span><span style="position:static;display:inline-block;width:10.6px;transform:scaleX(1.0);transform-origin:0 100%;">i</span><span style="position:static;display:inline-block;width:28px;transform:scaleX(1.09);transform-origin:0 100%;">n</span></div>
<svg width="800" height="450" viewBox="0 0 800 450"><svg x="500" y="42" width="140" height="50" viewBox="500 42 140 50">
<path d="M500 42H540.6L501.8 76H500z" fill="#000"/>
<path d="M535.8 46.2L529.6 52.2H535z" fill="#fff"/>
<path d="M515.3 52.4H527.6L507.8 71.3L512.5 61.8z" fill="#2a84d6"/>
<path d="M544.2 65.8L521.5 87.4H541.4L546 66.5z" fill="#000"/>
<path d="M542.6 68.6L538.9 82C538.4 83.8 537.4 85.2 535.6 85.2H524.9z" fill="#2a84d6"/>
<rect x="546.4" y="46" width="17" height="14.3" fill="#000"/>
<rect x="596" y="46" width="18" height="14.3" fill="#000"/>
<path d="M599.5 57.4L609 52.3L608 57.4z" fill="#fff"/>
</svg><rect x="658.2" y="40" width="0.7" height="67.6" fill="#b9b9b9"/><svg x="680" y="34.5" width="70" height="54" viewBox="680 34 70 54">
<defs>
<linearGradient id="ss1" x1="0.25" y1="0" x2="0.6" y2="1"><stop offset="0" stop-color="#ff2090"/><stop offset="0.2" stop-color="#e622c0"/><stop offset="0.45" stop-color="#9a30ee"/><stop offset="0.75" stop-color="#3a62ff"/><stop offset="1" stop-color="#1a90ff"/></linearGradient>
<linearGradient id="ss2" x1="0" y1="44" x2="0" y2="80" gradientUnits="userSpaceOnUse"><stop offset="0" stop-color="#505050"/><stop offset="0.48" stop-color="#3a3a3a"/><stop offset="0.5" stop-color="#171717"/><stop offset="1" stop-color="#262626"/></linearGradient>
</defs>
<g fill="url(#ss1)"><circle cx="709" cy="61.7" r="21.6"/><circle cx="724" cy="60.2" r="17"/></g>
<g fill="url(#ss2)"><circle cx="709" cy="61.9" r="17.7"/><circle cx="724" cy="60.4" r="13.3"/></g>
<g fill="none" stroke="#fff" stroke-width="1.2"><path d="M717.2 49.5A14.4 14.4 0 1 0 716.8 73.0"/><path d="M717.2 48.9V59"/><path d="M694.3 61.3H715.4"/><path d="M709.3 61.4A12.2 12.2 0 1 0 717.4 50.1"/></g>
<circle cx="717.9" cy="61.3" r="2.2" fill="#222" stroke="#fff" stroke-width="1.15"/>
</svg></svg>
<span style="top:55px;font-size:6.8px;color:#fff;font-weight:bold;left:723px;transform-origin:0 0;transform:translate(0.3px,0px) rotate(0.01deg) scaleX(1.056);">A</span>
<span style="top:63px;font-size:6.8px;color:#fff;font-weight:bold;left:723px;transform-origin:0 0;transform:translate(0.9px,0.6px) rotate(0.01deg) scaleX(1.216);">9</span>
<div style="top:88px;font-size:10.4px;color:#fff;font-weight:bold;left:564px;width:300px;text-align:center;transform-origin:50% 0;transform:translate(0.8px,0.4px) rotate(0.01deg) scaleX(1.013);"><span style="position:static">Split second</span></div>
<svg width="800" height="450" viewBox="0 0 800 450"><svg x="8.4" y="434.8" width="11" height="11" viewBox="0 0 11 11"><g fill="#1f8ae8"><rect x="0.2" y="0.2" width="4.8" height="4.8" rx="0.4"/><rect x="5.5" y="0.2" width="4.8" height="4.8" rx="0.4"/><rect x="0.2" y="5.5" width="4.8" height="4.8" rx="0.4"/><rect x="5.5" y="5.5" width="4.8" height="4.8" rx="0.4"/></g></svg><rect x="24.2" y="433.6" width="91" height="13.2" rx="6.6" fill="#f6f7f9" stroke="#d4d6da" stroke-width="0.4"/><svg x="28.8" y="436.6" width="7" height="7" viewBox="0 0 7 7"><circle cx="2.8" cy="2.8" r="1.9" fill="none" stroke="#222" stroke-width="0.7"/><path d="M4.2 4.2L6 6" stroke="#222" stroke-width="0.8"/></svg></svg>
<span style="top:438px;font-size:5px;color:#555;left:39px;transform-origin:0 0;transform:translate(0px,0.2px) rotate(0.01deg) scaleX(1.158);">搜索</span>
<svg width="800" height="450" viewBox="0 0 800 450"><svg x="120" y="434.6" width="12" height="11" viewBox="0 0 12 11"><path d="M0.6 1.2C0.6 0.8 0.9 0.5 1.3 0.5H4L5.2 1.7H10.6C11 1.7 11.3 2 11.3 2.4V9.4C11.3 9.8 11 10.1 10.6 10.1H1.3C0.9 10.1 0.6 9.8 0.6 9.4z" fill="#f6b91c"/><path d="M0.6 3.4H11.3V9.4C11.3 9.8 11 10.1 10.6 10.1H1.3C0.9 10.1 0.6 9.8 0.6 9.4z" fill="#fdd24a"/><rect x="2.6" y="6.2" width="6.8" height="3.9" rx="0.7" fill="#1b82e0"/></svg><svg x="138.2" y="434.4" width="12" height="12" viewBox="0 0 22 22"><circle cx="11.2" cy="11" r="10.2" fill="#1478cc"/>
<path d="M1.2 9.4C2 4.4 6 0.8 11.2 0.8C17 0.8 21.4 5.2 21.4 10.4C21.4 13.8 19 15.2 16.6 15.2C14.4 15.2 13.4 14.2 13.8 13.2C14.4 12.2 14.6 11.4 14.4 10.2C14 8 12 6.4 9.4 6.4C5.6 6.4 2 8.6 1.2 9.4z" fill="#3cc88a"/>
<path d="M1.2 9.4C2 4.4 6 0.8 11.2 0.8C8 2 6 5 5.6 7.4C3.6 8 2 8.8 1.2 9.4z" fill="#2fb4e0"/>
<path d="M8.4 13.2C8.4 10.8 9.8 9.2 10.8 8.6C8 8.6 5.2 10.6 5.2 14C5.2 18 8.6 21.2 12.6 21.2C15.8 21.2 18 19.6 19.6 17.4C18.4 18.2 16.8 18.6 15 18.4C11.6 18.2 8.4 16.2 8.4 13.2z" fill="#0a4a96"/><circle cx="12.4" cy="12" r="2.6" fill="#e9ebef"/></svg><svg x="157" y="434.8" width="11" height="11" viewBox="0 0 22 22"><rect x="0.4" y="0.4" width="21" height="21" fill="#3d1783"/><rect x="5" y="5" width="12" height="12" rx="2" fill="none" stroke="#d9c9f6" stroke-width="1.6"/><rect x="8.6" y="8.6" width="4.8" height="4.8" rx="1" fill="#f2ecff"/><path d="M11 1.8V5M11 17V20.2M1.8 11H5M17 11H20.2M7 1.8V5M15 1.8V5M7 17V20.2M15 17V20.2" stroke="#bfa8ec" stroke-width="1.2"/></svg><svg x="175" y="434.8" width="11" height="11" viewBox="0 0 22 22"><rect x="0.8" y="0.8" width="20.4" height="20.4" rx="2.6" fill="#1a1a1a"/><path d="M0.8 3.4A2.6 2.6 0 0 1 3.4 0.8H18.6A2.6 2.6 0 0 1 21.2 3.4V12.4H0.8z" fill="#2190dc"/><path d="M6 3V11M10.8 5.4V11M15.6 8V11M6 14.4V19.4M10.8 14.4V19.4M15.6 14.4V19.4" stroke="#fff" stroke-width="2.8"/></svg><svg x="193" y="435.6" width="12" height="10" viewBox="0 0 12 10"><rect x="0.6" y="0.6" width="10.6" height="8" rx="0.5" fill="#eaf4fd" stroke="#a9cdee" stroke-width="0.5"/><path d="M1 6.4L2.6 4.6L3.8 6L5.4 3L6.8 6.2L8.4 4L9.6 6L10.8 5.2V8.2H1z" fill="#3d9be9" opacity="0.85"/></svg><rect x="161.2" y="446.6" width="2.4" height="0.8" rx="0.4" fill="#8a8d92"/><rect x="179.2" y="446.6" width="2.4" height="0.8" rx="0.4" fill="#8a8d92"/><rect x="197.4" y="446.6" width="2.4" height="0.8" rx="0.4" fill="#8a8d92"/><svg x="709.4" y="437.6" width="6" height="4" viewBox="0 0 6 4"><path d="M0.6 3L2.8 0.8L5 3" stroke="#222" stroke-width="0.65" fill="none"/></svg></svg>
<span style="top:437px;font-size:6.4px;color:#222;left:721px;transform-origin:0 0;transform:translate(0.8px,0.6px) rotate(0.01deg) scaleX(1.033);">英</span>
<svg width="800" height="450" viewBox="0 0 800 450"><svg x="734.4" y="436" width="8" height="8" viewBox="0 0 8 8"><circle cx="3.8" cy="3.8" r="3" fill="none" stroke="#222" stroke-width="0.55"/><ellipse cx="3.8" cy="3.8" rx="1.3" ry="3" fill="none" stroke="#222" stroke-width="0.45"/><path d="M0.8 3.8H6.8" stroke="#222" stroke-width="0.45"/><circle cx="5.8" cy="5.8" r="1.5" fill="#e6e8ec" stroke="#222" stroke-width="0.45"/></svg><svg x="744.4" y="436" width="8" height="8" viewBox="0 0 8 8"><path d="M0.8 3H2L3.6 1.6V6.2L2 4.8H0.8z" fill="none" stroke="#222" stroke-width="0.5"/><path d="M4.6 2.6C5.2 3.2 5.2 4.6 4.6 5.2M5.6 1.8C6.8 3 6.8 4.8 5.6 6" stroke="#222" stroke-width="0.45" fill="none"/></svg></svg>
<span style="top:436px;font-size:4.5px;color:#222;right:17px;transform-origin:100% 0;transform:translate(-0.8px,0.2px) rotate(0.01deg) scaleX(1.012);">20:07</span>
<span style="top:442px;font-size:4.5px;color:#222;right:17px;transform-origin:100% 0;transform:translate(-0.8px,0.4px) rotate(0.01deg) scaleX(1.138);">2024/10/3</span>
<svg width="800" height="450" viewBox="0 0 800 450"><svg x="784.6" y="436.2" width="8" height="8" viewBox="0 0 8 8"><path d="M1.6 5.4V3.4A2.2 2.2 0 0 1 6 3.4V5.4L6.6 6H1z" fill="none" stroke="#222" stroke-width="0.55"/><path d="M3.2 6.6H4.4" stroke="#222" stroke-width="0.6"/></svg></svg>
</div></body></html>
